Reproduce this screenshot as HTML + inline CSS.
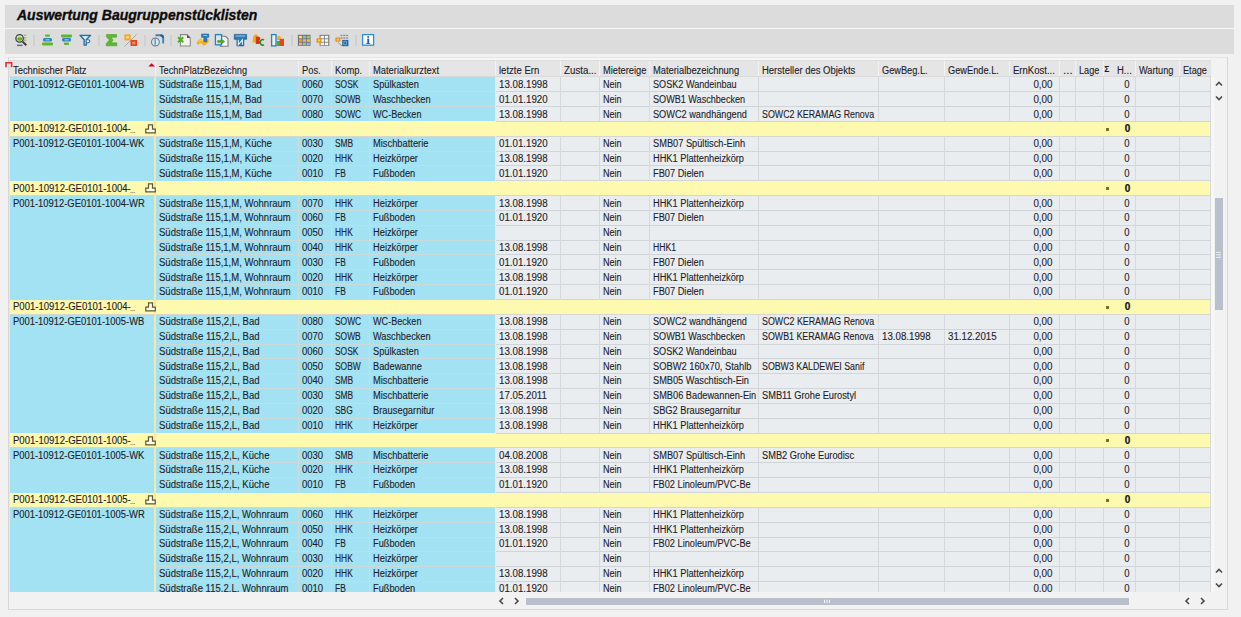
<!DOCTYPE html><html><head><meta charset="utf-8"><style>
*{margin:0;padding:0;box-sizing:border-box}
html,body{width:1241px;height:617px;overflow:hidden;background:#f1f1f1;font-family:"Liberation Sans",sans-serif;color:#262626}
.a{position:absolute}
#title{left:5px;top:5px;width:1229px;height:23px;background:#dcdcdc}
#title span{position:absolute;left:12px;top:2.3px;font:italic bold 14px "Liberation Sans",sans-serif;color:#0c0c0c;white-space:nowrap;-webkit-text-stroke:0.35px #0c0c0c}
#tsep{left:5px;top:28px;width:1229px;height:1px;background:#f7f7f7}
#tb{left:5px;top:29px;width:1229px;height:25px;background:#dcdcdc}
#panel{left:8px;top:57px;width:1220px;height:553px;border:1px solid #d6d6d6;border-top-color:#e4e4e4;border-width:1px 1px 1px 1px;border-bottom-color:#d9d9d9;background:#f2f2f2}
.t{position:absolute;white-space:nowrap;font-size:10px;line-height:12px;color:#23232f;-webkit-text-stroke:0.12px #1e1e2a;color:#1e1e2a;transform-origin:0 0}
.r{text-align:right}
.hd{background:#e5e5e5}
.b{background:#a3e2f2}
.g{background:#eaedf0}
.y{background:#fdf9af}
</style></head><body>
<div id="title" class="a"><span>Auswertung Baugruppenstücklisten</span></div>
<div id="tsep" class="a"></div>
<div id="tb" class="a"></div>
<div id="panel" class="a"></div>
<svg class="a" style="left:0;top:0" width="400" height="56" viewBox="0 0 400 56"><rect x="33.5" y="35" width="1" height="11" fill="#c4c4c4"/><rect x="98.5" y="35" width="1" height="11" fill="#c4c4c4"/><rect x="144.5" y="35" width="1" height="11" fill="#c4c4c4"/><rect x="170.5" y="35" width="1" height="11" fill="#c4c4c4"/><rect x="291.5" y="35" width="1" height="11" fill="#c4c4c4"/><rect x="355.5" y="35" width="1" height="11" fill="#c4c4c4"/><path d="M25.8 34.5v1.6M25.8 37v1.6M25.8 39.5v1.6" stroke="#9ccc3a" stroke-width="1.3"/><path d="M24.3 34.5v1.6M24.3 37v1.6M24.3 39.5v1.6" stroke="#777" stroke-width="0.6"/><circle cx="19.6" cy="38.4" r="3.7" fill="#d8efb0" stroke="#3e3e4a" stroke-width="1.3"/><ellipse cx="19.8" cy="38.8" rx="2.6" ry="1.9" fill="#5fb31f"/><path d="M22.6 41.6 L26.3 45.3" stroke="#3a3a3a" stroke-width="2"/><rect x="17" y="44.6" width="5.5" height="1.5" fill="#6a6a78"/><rect x="45" y="34.5" width="5" height="2.3" rx="0.8" fill="#5cb82e"/><rect x="43" y="38" width="9" height="3.6" rx="1.5" fill="#2f7fc1"/><rect x="45.5" y="39.2" width="4" height="1.2" fill="#9cc6ea"/><rect x="42" y="42.6" width="11" height="2.8" rx="0.8" fill="#5cb82e"/><rect x="61" y="34.6" width="11" height="2.8" rx="0.8" fill="#5cb82e"/><rect x="62" y="38" width="9" height="3.6" rx="1.5" fill="#2f7fc1"/><rect x="64.5" y="39.2" width="4" height="1.2" fill="#9cc6ea"/><rect x="64" y="42.6" width="5" height="2.5" rx="0.8" fill="#5cb82e"/><path d="M80 35.3 H90.6 L86.3 39.8 V45.2 L84.1 45.2 V39.8 Z" fill="#a8dcf5" stroke="#2c6e99" stroke-width="1.3" stroke-linejoin="round"/><path d="M82.8 36.6 H88 L85.4 39 Z" fill="#d8f0fb"/><path d="M86.8 39.8 h1.4 a1.5 1.5 0 0 1 0 3 h-1.4" stroke="#2c6e99" stroke-width="1.1" fill="#fff"/><path d="M106.5 34.5 H116.5 V37.3 H111 L113.2 40 L111 42.8 H116.8 V45.8 H106.3 V43.5 L109.4 40 L106.3 36.8 Z" fill="#5cb82e" stroke="#3e9a1c" stroke-width="0.5"/><path d="M136.5 34.5 L124.5 46.5" stroke="#9a9a9a" stroke-width="0.8"/><rect x="124.4" y="34.4" width="6.2" height="6" fill="#f5a623"/><rect x="126" y="36" width="3" height="2.6" fill="#fbd36b"/><rect x="130.5" y="40" width="6.5" height="6" fill="#e0471b"/><rect x="132.2" y="41.6" width="3.2" height="2.8" fill="#f08a5d"/><path d="M155.5 35.2 H159.8 Q163.2 35.2 163.2 38.6 V43.6" fill="none" stroke="#3a86bd" stroke-width="1.9"/><path d="M160.5 35.2 Q163.2 35.4 163.2 38" fill="none" stroke="#1f5f96" stroke-width="1.9"/><circle cx="155.4" cy="42" r="3.9" fill="#cfe8f7" stroke="#7b7b86" stroke-width="1.1"/><path d="M155.2 39.2 V44.8" stroke="#3a86bd" stroke-width="1.2"/><path d="M156.3 41.5 H157.6 M156.3 43 H157.6" stroke="#fff" stroke-width="0.7"/><path d="M180.5 34.6 H187 L190.3 37.9 V46 H180.5 Z" fill="#f2f2f2" stroke="#8a8a8a" stroke-width="1.1"/><path d="M187 34.6 V37.9 H190.3 Z" fill="#555"/><path d="M178 37.3 L183.3 42.3 M183.3 37.3 L178 42.3" stroke="#4fae1c" stroke-width="2"/><path d="M196.5 42.3 L200.5 38.6 L203.5 41 L208.8 38.5 L208.5 42.5 L204 46 L201 43.2 L197.5 45 Z" fill="#f7b21a"/><path d="M199 41.5 L201 40 L203.5 42 L207 40.3" fill="none" stroke="#fbd75a" stroke-width="0.9"/><path d="M201.6 34.1 H208.8 V37.3 H206.8 V41.8 H203.8 V37.3 H201.6 Z" fill="#2b7fc0" stroke="#1c5f98" stroke-width="0.6"/><rect x="203.2" y="35" width="4" height="1" fill="#8ec7ee"/><path d="M220.3 36.3 H225.5 L228 38.8 V46.2 H220.3 Z" fill="#fff" stroke="#7a7a7a" stroke-width="1.1"/><rect x="215.4" y="34.6" width="6.2" height="10.2" fill="#d6e9f7" stroke="#2b7fc0" stroke-width="1.3"/><path d="M217.6 40.6 H221.2 V38.8 L224.8 41.5 L221.2 44.2 V42.4 H217.6 Z" fill="#52b11f" stroke="#3a8d17" stroke-width="0.5"/><path d="M234.3 34.4 H246.6 V39.3 H243.8 V45.9 H236.9 V39.3 H234.3 Z" fill="#2b78b8" stroke="#1d5a8e" stroke-width="0.7"/><rect x="235.6" y="35.4" width="9.7" height="1.2" fill="#86c0ea"/><path d="M238.3 39.8 V44.8 L242.4 39.8 V44.8" fill="none" stroke="#e4f2fb" stroke-width="1.1"/><path d="M252.4 42.5 L253.3 36.5 Q254.5 34 256.3 34.2 Q258 34.6 258.3 37 L258.6 42.5 Z" fill="#f4ad14"/><path d="M255.8 36.8 h3 a2 1.8 0 0 1 0 3.5 a2 1.8 0 0 1 0 3.6 h-3 Z" fill="#d8321a"/><path d="M264 40 a2.4 2.8 0 1 0 0 4.6" stroke="#2f8a2e" stroke-width="1.7" fill="none"/><rect x="271.6" y="34.6" width="4.4" height="11.3" fill="#e8f2fa" stroke="#2d7fc0" stroke-width="1.3"/><rect x="277" y="36" width="3.6" height="4" fill="#f6b21b"/><rect x="276.6" y="41" width="3.6" height="5" fill="#4caf2a"/><rect x="279.6" y="38.8" width="4.4" height="7.2" fill="#e0471b"/><rect x="297.9" y="34.8" width="12.6" height="11" fill="#6d6d6d"/><rect x="298.9" y="35.8" width="3.2" height="2.6" fill="#f5e15a"/><rect x="302.8" y="35.8" width="3.2" height="2.6" fill="#8ab4e8"/><rect x="306.7" y="35.8" width="3.2" height="2.6" fill="#8fd06a"/><rect x="298.9" y="39.2" width="3.2" height="2.6" fill="#f59a23"/><rect x="302.8" y="39.2" width="3.2" height="2.6" fill="#f0a0c8"/><rect x="306.7" y="39.2" width="3.2" height="2.6" fill="#f2c530"/><rect x="298.9" y="42.6" width="3.2" height="2.6" fill="#f2a0c0"/><rect x="302.8" y="42.6" width="3.2" height="2.6" fill="#8fd06a"/><rect x="306.7" y="42.6" width="3.2" height="2.6" fill="#8ab4e8"/><rect x="319.6" y="34.8" width="9.7" height="11" fill="#777"/><rect x="320.6" y="35.8" width="3.4" height="2.6" fill="#f4f4f4"/><rect x="324.8" y="35.8" width="3.4" height="2.6" fill="#f4f4f4"/><rect x="320.6" y="39.2" width="3.4" height="2.6" fill="#f4f4f4"/><rect x="324.8" y="39.2" width="3.4" height="2.6" fill="#f4f4f4"/><rect x="320.6" y="42.6" width="3.4" height="2.6" fill="#f4f4f4"/><rect x="324.8" y="42.6" width="3.4" height="2.6" fill="#f4f4f4"/><rect x="316.5" y="38.2" width="5" height="4.6" rx="1" fill="#f08c1e"/><rect x="318" y="39.4" width="2.2" height="2" fill="#ffd23a"/><rect x="340.5" y="34.8" width="2" height="1.3" fill="#8a8a8a"/><rect x="343.3" y="34.8" width="2" height="1.3" fill="#8a8a8a"/><rect x="346.1" y="34.8" width="2" height="1.3" fill="#8a8a8a"/><rect x="340.5" y="37.4" width="2" height="1.3" fill="#8a8a8a"/><rect x="343.3" y="37.4" width="2" height="1.3" fill="#8a8a8a"/><rect x="346.1" y="37.4" width="2" height="1.3" fill="#8a8a8a"/><rect x="335.3" y="37.6" width="5" height="4.2" rx="0.8" fill="#f08c1e"/><rect x="336.8" y="38.7" width="2.2" height="1.9" fill="#ffd23a"/><path d="M338 42.5 L342 46" stroke="#8a8a8a" stroke-width="0.8"/><rect x="342.2" y="39.9" width="6.2" height="6.3" fill="#1f669e"/><path d="M343.8 41.3 h2.6 v3.5 h-2.6 Z" fill="none" stroke="#a8d0ee" stroke-width="0.6"/><rect x="362.6" y="34.6" width="11" height="10.6" fill="#fff" stroke="#2d8fd0" stroke-width="1.3"/><rect x="367.3" y="36.2" width="1.8" height="1.6" fill="#1a5fa8"/><rect x="367.3" y="38.6" width="1.8" height="5" fill="#1a5fa8"/><rect x="366.2" y="43" width="4" height="0.8" fill="#1a5fa8"/></svg>
<div class="a" style="left:0;top:0;width:1241px;height:592.4px;overflow:hidden">
<div class="a" style="left:9px;top:58px;width:1201.5px;height:2px;background:#f6f6f6"></div>
<div class="a" style="left:9px;top:60px;width:1201.5px;height:1px;background:#dcdcdc"></div>
<div class="a hd" style="left:9px;top:61.2px;width:1201.5px;height:15.65px"></div>
<div class="t" style="left:12.5px;top:65px;transform:scaleX(0.938)">Technischer Platz</div>
<div class="a" style="left:154.8px;top:61.2px;width:1px;height:15.65px;background:#f2f2f2"></div>
<div class="t" style="left:158.8px;top:65px;transform:scaleX(0.921)">TechnPlatzBezeichng</div>
<div class="a" style="left:298.1px;top:61.2px;width:1px;height:15.65px;background:#f2f2f2"></div>
<div class="t" style="left:302.1px;top:65px;transform:scaleX(0.935)">Pos.</div>
<div class="a" style="left:331px;top:61.2px;width:1px;height:15.65px;background:#f2f2f2"></div>
<div class="t" style="left:335px;top:65px;transform:scaleX(0.936)">Komp.</div>
<div class="a" style="left:369px;top:61.2px;width:1px;height:15.65px;background:#f2f2f2"></div>
<div class="t" style="left:373px;top:65px;transform:scaleX(0.936)">Materialkurztext</div>
<div class="a" style="left:495px;top:61.2px;width:1px;height:15.65px;background:#f2f2f2"></div>
<div class="t" style="left:499px;top:65px;transform:scaleX(0.953)">letzte Ern</div>
<div class="a" style="left:559.8px;top:61.2px;width:1px;height:15.65px;background:#f2f2f2"></div>
<div class="t" style="left:563.8px;top:65px;transform:scaleX(0.976)">Zusta...</div>
<div class="a" style="left:599.3px;top:61.2px;width:1px;height:15.65px;background:#f2f2f2"></div>
<div class="t" style="left:603.3px;top:65px;transform:scaleX(0.928)">Mietereige</div>
<div class="a" style="left:648.5px;top:61.2px;width:1px;height:15.65px;background:#f2f2f2"></div>
<div class="t" style="left:652.5px;top:65px;transform:scaleX(0.934)">Materialbezeichnung</div>
<div class="a" style="left:757.9px;top:61.2px;width:1px;height:15.65px;background:#f2f2f2"></div>
<div class="t" style="left:761.9px;top:65px;transform:scaleX(0.948)">Hersteller des Objekts</div>
<div class="a" style="left:878px;top:61.2px;width:1px;height:15.65px;background:#f2f2f2"></div>
<div class="t" style="left:882px;top:65px;transform:scaleX(0.922)">GewBeg.L.</div>
<div class="a" style="left:943.7px;top:61.2px;width:1px;height:15.65px;background:#f2f2f2"></div>
<div class="t" style="left:947.7px;top:65px;transform:scaleX(0.924)">GewEnde.L.</div>
<div class="a" style="left:1009.3px;top:61.2px;width:1px;height:15.65px;background:#f2f2f2"></div>
<div class="t" style="left:1013.3px;top:65px;transform:scaleX(0.954)">ErnKost...</div>
<div class="a" style="left:1058.7px;top:61.2px;width:1px;height:15.65px;background:#f2f2f2"></div>
<div class="t" style="left:1062.7px;top:65px;transform:scaleX(1.152)">...</div>
<div class="a" style="left:1075px;top:61.2px;width:1px;height:15.65px;background:#f2f2f2"></div>
<div class="t" style="left:1079px;top:65px;transform:scaleX(0.913)">Lage</div>
<div class="a" style="left:1102.9px;top:61.2px;width:1px;height:15.65px;background:#f2f2f2"></div>
<div class="t" style="left:1117px;top:65px;transform:scaleX(0.95)">H...</div>
<div class="a" style="left:1135.1px;top:61.2px;width:1px;height:15.65px;background:#f2f2f2"></div>
<div class="t" style="left:1139.1px;top:65px;transform:scaleX(0.919)">Wartung</div>
<div class="a" style="left:1178.8px;top:61.2px;width:1px;height:15.65px;background:#f2f2f2"></div>
<div class="t" style="left:1182.8px;top:65px;transform:scaleX(0.917)">Etage</div>
<div class="t" style="left:1104.3px;top:63px;font-size:8.5px;font-weight:bold;-webkit-text-stroke:0">&#931;</div>
<div class="a b" style="left:9px;top:76.85px;width:486.5px;height:14.85px"></div>
<div class="a g" style="left:495.5px;top:76.85px;width:715px;height:14.85px"></div>
<div class="a b" style="left:9px;top:91.69px;width:486.5px;height:14.85px"></div>
<div class="a g" style="left:495.5px;top:91.69px;width:715px;height:14.85px"></div>
<div class="a b" style="left:9px;top:106.54px;width:486.5px;height:14.85px"></div>
<div class="a g" style="left:495.5px;top:106.54px;width:715px;height:14.85px"></div>
<div class="a y" style="left:9px;top:121.38px;width:1201.5px;height:14.85px"></div>
<div class="a b" style="left:9px;top:136.23px;width:486.5px;height:14.85px"></div>
<div class="a g" style="left:495.5px;top:136.23px;width:715px;height:14.85px"></div>
<div class="a b" style="left:9px;top:151.07px;width:486.5px;height:14.85px"></div>
<div class="a g" style="left:495.5px;top:151.07px;width:715px;height:14.85px"></div>
<div class="a b" style="left:9px;top:165.92px;width:486.5px;height:14.85px"></div>
<div class="a g" style="left:495.5px;top:165.92px;width:715px;height:14.85px"></div>
<div class="a y" style="left:9px;top:180.76px;width:1201.5px;height:14.85px"></div>
<div class="a b" style="left:9px;top:195.61px;width:486.5px;height:14.85px"></div>
<div class="a g" style="left:495.5px;top:195.61px;width:715px;height:14.85px"></div>
<div class="a b" style="left:9px;top:210.46px;width:486.5px;height:14.85px"></div>
<div class="a g" style="left:495.5px;top:210.46px;width:715px;height:14.85px"></div>
<div class="a b" style="left:9px;top:225.3px;width:486.5px;height:14.85px"></div>
<div class="a g" style="left:495.5px;top:225.3px;width:715px;height:14.85px"></div>
<div class="a b" style="left:9px;top:240.15px;width:486.5px;height:14.85px"></div>
<div class="a g" style="left:495.5px;top:240.15px;width:715px;height:14.85px"></div>
<div class="a b" style="left:9px;top:254.99px;width:486.5px;height:14.85px"></div>
<div class="a g" style="left:495.5px;top:254.99px;width:715px;height:14.85px"></div>
<div class="a b" style="left:9px;top:269.84px;width:486.5px;height:14.85px"></div>
<div class="a g" style="left:495.5px;top:269.84px;width:715px;height:14.85px"></div>
<div class="a b" style="left:9px;top:284.68px;width:486.5px;height:14.85px"></div>
<div class="a g" style="left:495.5px;top:284.68px;width:715px;height:14.85px"></div>
<div class="a y" style="left:9px;top:299.52px;width:1201.5px;height:14.85px"></div>
<div class="a b" style="left:9px;top:314.37px;width:486.5px;height:14.85px"></div>
<div class="a g" style="left:495.5px;top:314.37px;width:715px;height:14.85px"></div>
<div class="a b" style="left:9px;top:329.22px;width:486.5px;height:14.85px"></div>
<div class="a g" style="left:495.5px;top:329.22px;width:715px;height:14.85px"></div>
<div class="a b" style="left:9px;top:344.06px;width:486.5px;height:14.85px"></div>
<div class="a g" style="left:495.5px;top:344.06px;width:715px;height:14.85px"></div>
<div class="a b" style="left:9px;top:358.9px;width:486.5px;height:14.85px"></div>
<div class="a g" style="left:495.5px;top:358.9px;width:715px;height:14.85px"></div>
<div class="a b" style="left:9px;top:373.75px;width:486.5px;height:14.85px"></div>
<div class="a g" style="left:495.5px;top:373.75px;width:715px;height:14.85px"></div>
<div class="a b" style="left:9px;top:388.6px;width:486.5px;height:14.85px"></div>
<div class="a g" style="left:495.5px;top:388.6px;width:715px;height:14.85px"></div>
<div class="a b" style="left:9px;top:403.44px;width:486.5px;height:14.85px"></div>
<div class="a g" style="left:495.5px;top:403.44px;width:715px;height:14.85px"></div>
<div class="a b" style="left:9px;top:418.28px;width:486.5px;height:14.85px"></div>
<div class="a g" style="left:495.5px;top:418.28px;width:715px;height:14.85px"></div>
<div class="a y" style="left:9px;top:433.13px;width:1201.5px;height:14.85px"></div>
<div class="a b" style="left:9px;top:447.98px;width:486.5px;height:14.85px"></div>
<div class="a g" style="left:495.5px;top:447.98px;width:715px;height:14.85px"></div>
<div class="a b" style="left:9px;top:462.82px;width:486.5px;height:14.85px"></div>
<div class="a g" style="left:495.5px;top:462.82px;width:715px;height:14.85px"></div>
<div class="a b" style="left:9px;top:477.66px;width:486.5px;height:14.85px"></div>
<div class="a g" style="left:495.5px;top:477.66px;width:715px;height:14.85px"></div>
<div class="a y" style="left:9px;top:492.51px;width:1201.5px;height:14.85px"></div>
<div class="a b" style="left:9px;top:507.36px;width:486.5px;height:14.85px"></div>
<div class="a g" style="left:495.5px;top:507.36px;width:715px;height:14.85px"></div>
<div class="a b" style="left:9px;top:522.2px;width:486.5px;height:14.85px"></div>
<div class="a g" style="left:495.5px;top:522.2px;width:715px;height:14.85px"></div>
<div class="a b" style="left:9px;top:537.04px;width:486.5px;height:14.85px"></div>
<div class="a g" style="left:495.5px;top:537.04px;width:715px;height:14.85px"></div>
<div class="a b" style="left:9px;top:551.89px;width:486.5px;height:14.85px"></div>
<div class="a g" style="left:495.5px;top:551.89px;width:715px;height:14.85px"></div>
<div class="a b" style="left:9px;top:566.74px;width:486.5px;height:14.85px"></div>
<div class="a g" style="left:495.5px;top:566.74px;width:715px;height:14.85px"></div>
<div class="a b" style="left:9px;top:581.58px;width:486.5px;height:14.85px"></div>
<div class="a g" style="left:495.5px;top:581.58px;width:715px;height:14.85px"></div>
<div class="a y" style="left:9px;top:596.43px;width:1201.5px;height:14.85px"></div>
<div class="a" style="left:155.3px;top:91.19px;width:340.2px;height:1px;background:#cad9da"></div>
<div class="a" style="left:495.5px;top:91.19px;width:715px;height:1px;background:#d1d5d9"></div>
<div class="a" style="left:298.1px;top:76.85px;width:1px;height:14.85px;background:#cddcda"></div>
<div class="a" style="left:331px;top:76.85px;width:1px;height:14.85px;background:#cddcda"></div>
<div class="a" style="left:369px;top:76.85px;width:1px;height:14.85px;background:#cddcda"></div>
<div class="a" style="left:495px;top:76.85px;width:1px;height:14.85px;background:#e6eaee"></div>
<div class="a" style="left:559.8px;top:76.85px;width:1px;height:14.85px;background:#d6d9dd"></div>
<div class="a" style="left:599.3px;top:76.85px;width:1px;height:14.85px;background:#d6d9dd"></div>
<div class="a" style="left:648.5px;top:76.85px;width:1px;height:14.85px;background:#d6d9dd"></div>
<div class="a" style="left:757.9px;top:76.85px;width:1px;height:14.85px;background:#d6d9dd"></div>
<div class="a" style="left:878px;top:76.85px;width:1px;height:14.85px;background:#d6d9dd"></div>
<div class="a" style="left:943.7px;top:76.85px;width:1px;height:14.85px;background:#d6d9dd"></div>
<div class="a" style="left:1009.3px;top:76.85px;width:1px;height:14.85px;background:#d6d9dd"></div>
<div class="a" style="left:1058.7px;top:76.85px;width:1px;height:14.85px;background:#d6d9dd"></div>
<div class="a" style="left:1075px;top:76.85px;width:1px;height:14.85px;background:#d6d9dd"></div>
<div class="a" style="left:1102.9px;top:76.85px;width:1px;height:14.85px;background:#d6d9dd"></div>
<div class="a" style="left:1135.1px;top:76.85px;width:1px;height:14.85px;background:#d6d9dd"></div>
<div class="a" style="left:1178.8px;top:76.85px;width:1px;height:14.85px;background:#d6d9dd"></div>
<div class="a" style="left:155.3px;top:106.04px;width:340.2px;height:1px;background:#cad9da"></div>
<div class="a" style="left:495.5px;top:106.04px;width:715px;height:1px;background:#d1d5d9"></div>
<div class="a" style="left:298.1px;top:91.69px;width:1px;height:14.85px;background:#cddcda"></div>
<div class="a" style="left:331px;top:91.69px;width:1px;height:14.85px;background:#cddcda"></div>
<div class="a" style="left:369px;top:91.69px;width:1px;height:14.85px;background:#cddcda"></div>
<div class="a" style="left:495px;top:91.69px;width:1px;height:14.85px;background:#e6eaee"></div>
<div class="a" style="left:559.8px;top:91.69px;width:1px;height:14.85px;background:#d6d9dd"></div>
<div class="a" style="left:599.3px;top:91.69px;width:1px;height:14.85px;background:#d6d9dd"></div>
<div class="a" style="left:648.5px;top:91.69px;width:1px;height:14.85px;background:#d6d9dd"></div>
<div class="a" style="left:757.9px;top:91.69px;width:1px;height:14.85px;background:#d6d9dd"></div>
<div class="a" style="left:878px;top:91.69px;width:1px;height:14.85px;background:#d6d9dd"></div>
<div class="a" style="left:943.7px;top:91.69px;width:1px;height:14.85px;background:#d6d9dd"></div>
<div class="a" style="left:1009.3px;top:91.69px;width:1px;height:14.85px;background:#d6d9dd"></div>
<div class="a" style="left:1058.7px;top:91.69px;width:1px;height:14.85px;background:#d6d9dd"></div>
<div class="a" style="left:1075px;top:91.69px;width:1px;height:14.85px;background:#d6d9dd"></div>
<div class="a" style="left:1102.9px;top:91.69px;width:1px;height:14.85px;background:#d6d9dd"></div>
<div class="a" style="left:1135.1px;top:91.69px;width:1px;height:14.85px;background:#d6d9dd"></div>
<div class="a" style="left:1178.8px;top:91.69px;width:1px;height:14.85px;background:#d6d9dd"></div>
<div class="a" style="left:495.5px;top:120.88px;width:715px;height:1px;background:#d1d5d9"></div>
<div class="a" style="left:298.1px;top:106.54px;width:1px;height:14.85px;background:#cddcda"></div>
<div class="a" style="left:331px;top:106.54px;width:1px;height:14.85px;background:#cddcda"></div>
<div class="a" style="left:369px;top:106.54px;width:1px;height:14.85px;background:#cddcda"></div>
<div class="a" style="left:495px;top:106.54px;width:1px;height:14.85px;background:#e6eaee"></div>
<div class="a" style="left:559.8px;top:106.54px;width:1px;height:14.85px;background:#d6d9dd"></div>
<div class="a" style="left:599.3px;top:106.54px;width:1px;height:14.85px;background:#d6d9dd"></div>
<div class="a" style="left:648.5px;top:106.54px;width:1px;height:14.85px;background:#d6d9dd"></div>
<div class="a" style="left:757.9px;top:106.54px;width:1px;height:14.85px;background:#d6d9dd"></div>
<div class="a" style="left:878px;top:106.54px;width:1px;height:14.85px;background:#d6d9dd"></div>
<div class="a" style="left:943.7px;top:106.54px;width:1px;height:14.85px;background:#d6d9dd"></div>
<div class="a" style="left:1009.3px;top:106.54px;width:1px;height:14.85px;background:#d6d9dd"></div>
<div class="a" style="left:1058.7px;top:106.54px;width:1px;height:14.85px;background:#d6d9dd"></div>
<div class="a" style="left:1075px;top:106.54px;width:1px;height:14.85px;background:#d6d9dd"></div>
<div class="a" style="left:1102.9px;top:106.54px;width:1px;height:14.85px;background:#d6d9dd"></div>
<div class="a" style="left:1135.1px;top:106.54px;width:1px;height:14.85px;background:#d6d9dd"></div>
<div class="a" style="left:1178.8px;top:106.54px;width:1px;height:14.85px;background:#d6d9dd"></div>
<div class="a" style="left:9px;top:135.73px;width:1201.5px;height:1px;background:#d6d8d0"></div>
<div class="a" style="left:155.3px;top:150.57px;width:340.2px;height:1px;background:#cad9da"></div>
<div class="a" style="left:495.5px;top:150.57px;width:715px;height:1px;background:#d1d5d9"></div>
<div class="a" style="left:298.1px;top:136.23px;width:1px;height:14.85px;background:#cddcda"></div>
<div class="a" style="left:331px;top:136.23px;width:1px;height:14.85px;background:#cddcda"></div>
<div class="a" style="left:369px;top:136.23px;width:1px;height:14.85px;background:#cddcda"></div>
<div class="a" style="left:495px;top:136.23px;width:1px;height:14.85px;background:#e6eaee"></div>
<div class="a" style="left:559.8px;top:136.23px;width:1px;height:14.85px;background:#d6d9dd"></div>
<div class="a" style="left:599.3px;top:136.23px;width:1px;height:14.85px;background:#d6d9dd"></div>
<div class="a" style="left:648.5px;top:136.23px;width:1px;height:14.85px;background:#d6d9dd"></div>
<div class="a" style="left:757.9px;top:136.23px;width:1px;height:14.85px;background:#d6d9dd"></div>
<div class="a" style="left:878px;top:136.23px;width:1px;height:14.85px;background:#d6d9dd"></div>
<div class="a" style="left:943.7px;top:136.23px;width:1px;height:14.85px;background:#d6d9dd"></div>
<div class="a" style="left:1009.3px;top:136.23px;width:1px;height:14.85px;background:#d6d9dd"></div>
<div class="a" style="left:1058.7px;top:136.23px;width:1px;height:14.85px;background:#d6d9dd"></div>
<div class="a" style="left:1075px;top:136.23px;width:1px;height:14.85px;background:#d6d9dd"></div>
<div class="a" style="left:1102.9px;top:136.23px;width:1px;height:14.85px;background:#d6d9dd"></div>
<div class="a" style="left:1135.1px;top:136.23px;width:1px;height:14.85px;background:#d6d9dd"></div>
<div class="a" style="left:1178.8px;top:136.23px;width:1px;height:14.85px;background:#d6d9dd"></div>
<div class="a" style="left:155.3px;top:165.42px;width:340.2px;height:1px;background:#cad9da"></div>
<div class="a" style="left:495.5px;top:165.42px;width:715px;height:1px;background:#d1d5d9"></div>
<div class="a" style="left:298.1px;top:151.07px;width:1px;height:14.85px;background:#cddcda"></div>
<div class="a" style="left:331px;top:151.07px;width:1px;height:14.85px;background:#cddcda"></div>
<div class="a" style="left:369px;top:151.07px;width:1px;height:14.85px;background:#cddcda"></div>
<div class="a" style="left:495px;top:151.07px;width:1px;height:14.85px;background:#e6eaee"></div>
<div class="a" style="left:559.8px;top:151.07px;width:1px;height:14.85px;background:#d6d9dd"></div>
<div class="a" style="left:599.3px;top:151.07px;width:1px;height:14.85px;background:#d6d9dd"></div>
<div class="a" style="left:648.5px;top:151.07px;width:1px;height:14.85px;background:#d6d9dd"></div>
<div class="a" style="left:757.9px;top:151.07px;width:1px;height:14.85px;background:#d6d9dd"></div>
<div class="a" style="left:878px;top:151.07px;width:1px;height:14.85px;background:#d6d9dd"></div>
<div class="a" style="left:943.7px;top:151.07px;width:1px;height:14.85px;background:#d6d9dd"></div>
<div class="a" style="left:1009.3px;top:151.07px;width:1px;height:14.85px;background:#d6d9dd"></div>
<div class="a" style="left:1058.7px;top:151.07px;width:1px;height:14.85px;background:#d6d9dd"></div>
<div class="a" style="left:1075px;top:151.07px;width:1px;height:14.85px;background:#d6d9dd"></div>
<div class="a" style="left:1102.9px;top:151.07px;width:1px;height:14.85px;background:#d6d9dd"></div>
<div class="a" style="left:1135.1px;top:151.07px;width:1px;height:14.85px;background:#d6d9dd"></div>
<div class="a" style="left:1178.8px;top:151.07px;width:1px;height:14.85px;background:#d6d9dd"></div>
<div class="a" style="left:495.5px;top:180.27px;width:715px;height:1px;background:#d1d5d9"></div>
<div class="a" style="left:298.1px;top:165.92px;width:1px;height:14.85px;background:#cddcda"></div>
<div class="a" style="left:331px;top:165.92px;width:1px;height:14.85px;background:#cddcda"></div>
<div class="a" style="left:369px;top:165.92px;width:1px;height:14.85px;background:#cddcda"></div>
<div class="a" style="left:495px;top:165.92px;width:1px;height:14.85px;background:#e6eaee"></div>
<div class="a" style="left:559.8px;top:165.92px;width:1px;height:14.85px;background:#d6d9dd"></div>
<div class="a" style="left:599.3px;top:165.92px;width:1px;height:14.85px;background:#d6d9dd"></div>
<div class="a" style="left:648.5px;top:165.92px;width:1px;height:14.85px;background:#d6d9dd"></div>
<div class="a" style="left:757.9px;top:165.92px;width:1px;height:14.85px;background:#d6d9dd"></div>
<div class="a" style="left:878px;top:165.92px;width:1px;height:14.85px;background:#d6d9dd"></div>
<div class="a" style="left:943.7px;top:165.92px;width:1px;height:14.85px;background:#d6d9dd"></div>
<div class="a" style="left:1009.3px;top:165.92px;width:1px;height:14.85px;background:#d6d9dd"></div>
<div class="a" style="left:1058.7px;top:165.92px;width:1px;height:14.85px;background:#d6d9dd"></div>
<div class="a" style="left:1075px;top:165.92px;width:1px;height:14.85px;background:#d6d9dd"></div>
<div class="a" style="left:1102.9px;top:165.92px;width:1px;height:14.85px;background:#d6d9dd"></div>
<div class="a" style="left:1135.1px;top:165.92px;width:1px;height:14.85px;background:#d6d9dd"></div>
<div class="a" style="left:1178.8px;top:165.92px;width:1px;height:14.85px;background:#d6d9dd"></div>
<div class="a" style="left:9px;top:195.11px;width:1201.5px;height:1px;background:#d6d8d0"></div>
<div class="a" style="left:155.3px;top:209.96px;width:340.2px;height:1px;background:#cad9da"></div>
<div class="a" style="left:495.5px;top:209.96px;width:715px;height:1px;background:#d1d5d9"></div>
<div class="a" style="left:298.1px;top:195.61px;width:1px;height:14.85px;background:#cddcda"></div>
<div class="a" style="left:331px;top:195.61px;width:1px;height:14.85px;background:#cddcda"></div>
<div class="a" style="left:369px;top:195.61px;width:1px;height:14.85px;background:#cddcda"></div>
<div class="a" style="left:495px;top:195.61px;width:1px;height:14.85px;background:#e6eaee"></div>
<div class="a" style="left:559.8px;top:195.61px;width:1px;height:14.85px;background:#d6d9dd"></div>
<div class="a" style="left:599.3px;top:195.61px;width:1px;height:14.85px;background:#d6d9dd"></div>
<div class="a" style="left:648.5px;top:195.61px;width:1px;height:14.85px;background:#d6d9dd"></div>
<div class="a" style="left:757.9px;top:195.61px;width:1px;height:14.85px;background:#d6d9dd"></div>
<div class="a" style="left:878px;top:195.61px;width:1px;height:14.85px;background:#d6d9dd"></div>
<div class="a" style="left:943.7px;top:195.61px;width:1px;height:14.85px;background:#d6d9dd"></div>
<div class="a" style="left:1009.3px;top:195.61px;width:1px;height:14.85px;background:#d6d9dd"></div>
<div class="a" style="left:1058.7px;top:195.61px;width:1px;height:14.85px;background:#d6d9dd"></div>
<div class="a" style="left:1075px;top:195.61px;width:1px;height:14.85px;background:#d6d9dd"></div>
<div class="a" style="left:1102.9px;top:195.61px;width:1px;height:14.85px;background:#d6d9dd"></div>
<div class="a" style="left:1135.1px;top:195.61px;width:1px;height:14.85px;background:#d6d9dd"></div>
<div class="a" style="left:1178.8px;top:195.61px;width:1px;height:14.85px;background:#d6d9dd"></div>
<div class="a" style="left:155.3px;top:224.8px;width:340.2px;height:1px;background:#cad9da"></div>
<div class="a" style="left:495.5px;top:224.8px;width:715px;height:1px;background:#d1d5d9"></div>
<div class="a" style="left:298.1px;top:210.46px;width:1px;height:14.85px;background:#cddcda"></div>
<div class="a" style="left:331px;top:210.46px;width:1px;height:14.85px;background:#cddcda"></div>
<div class="a" style="left:369px;top:210.46px;width:1px;height:14.85px;background:#cddcda"></div>
<div class="a" style="left:495px;top:210.46px;width:1px;height:14.85px;background:#e6eaee"></div>
<div class="a" style="left:559.8px;top:210.46px;width:1px;height:14.85px;background:#d6d9dd"></div>
<div class="a" style="left:599.3px;top:210.46px;width:1px;height:14.85px;background:#d6d9dd"></div>
<div class="a" style="left:648.5px;top:210.46px;width:1px;height:14.85px;background:#d6d9dd"></div>
<div class="a" style="left:757.9px;top:210.46px;width:1px;height:14.85px;background:#d6d9dd"></div>
<div class="a" style="left:878px;top:210.46px;width:1px;height:14.85px;background:#d6d9dd"></div>
<div class="a" style="left:943.7px;top:210.46px;width:1px;height:14.85px;background:#d6d9dd"></div>
<div class="a" style="left:1009.3px;top:210.46px;width:1px;height:14.85px;background:#d6d9dd"></div>
<div class="a" style="left:1058.7px;top:210.46px;width:1px;height:14.85px;background:#d6d9dd"></div>
<div class="a" style="left:1075px;top:210.46px;width:1px;height:14.85px;background:#d6d9dd"></div>
<div class="a" style="left:1102.9px;top:210.46px;width:1px;height:14.85px;background:#d6d9dd"></div>
<div class="a" style="left:1135.1px;top:210.46px;width:1px;height:14.85px;background:#d6d9dd"></div>
<div class="a" style="left:1178.8px;top:210.46px;width:1px;height:14.85px;background:#d6d9dd"></div>
<div class="a" style="left:155.3px;top:239.65px;width:340.2px;height:1px;background:#cad9da"></div>
<div class="a" style="left:495.5px;top:239.65px;width:715px;height:1px;background:#d1d5d9"></div>
<div class="a" style="left:298.1px;top:225.3px;width:1px;height:14.85px;background:#cddcda"></div>
<div class="a" style="left:331px;top:225.3px;width:1px;height:14.85px;background:#cddcda"></div>
<div class="a" style="left:369px;top:225.3px;width:1px;height:14.85px;background:#cddcda"></div>
<div class="a" style="left:495px;top:225.3px;width:1px;height:14.85px;background:#e6eaee"></div>
<div class="a" style="left:559.8px;top:225.3px;width:1px;height:14.85px;background:#d6d9dd"></div>
<div class="a" style="left:599.3px;top:225.3px;width:1px;height:14.85px;background:#d6d9dd"></div>
<div class="a" style="left:648.5px;top:225.3px;width:1px;height:14.85px;background:#d6d9dd"></div>
<div class="a" style="left:757.9px;top:225.3px;width:1px;height:14.85px;background:#d6d9dd"></div>
<div class="a" style="left:878px;top:225.3px;width:1px;height:14.85px;background:#d6d9dd"></div>
<div class="a" style="left:943.7px;top:225.3px;width:1px;height:14.85px;background:#d6d9dd"></div>
<div class="a" style="left:1009.3px;top:225.3px;width:1px;height:14.85px;background:#d6d9dd"></div>
<div class="a" style="left:1058.7px;top:225.3px;width:1px;height:14.85px;background:#d6d9dd"></div>
<div class="a" style="left:1075px;top:225.3px;width:1px;height:14.85px;background:#d6d9dd"></div>
<div class="a" style="left:1102.9px;top:225.3px;width:1px;height:14.85px;background:#d6d9dd"></div>
<div class="a" style="left:1135.1px;top:225.3px;width:1px;height:14.85px;background:#d6d9dd"></div>
<div class="a" style="left:1178.8px;top:225.3px;width:1px;height:14.85px;background:#d6d9dd"></div>
<div class="a" style="left:155.3px;top:254.49px;width:340.2px;height:1px;background:#cad9da"></div>
<div class="a" style="left:495.5px;top:254.49px;width:715px;height:1px;background:#d1d5d9"></div>
<div class="a" style="left:298.1px;top:240.15px;width:1px;height:14.85px;background:#cddcda"></div>
<div class="a" style="left:331px;top:240.15px;width:1px;height:14.85px;background:#cddcda"></div>
<div class="a" style="left:369px;top:240.15px;width:1px;height:14.85px;background:#cddcda"></div>
<div class="a" style="left:495px;top:240.15px;width:1px;height:14.85px;background:#e6eaee"></div>
<div class="a" style="left:559.8px;top:240.15px;width:1px;height:14.85px;background:#d6d9dd"></div>
<div class="a" style="left:599.3px;top:240.15px;width:1px;height:14.85px;background:#d6d9dd"></div>
<div class="a" style="left:648.5px;top:240.15px;width:1px;height:14.85px;background:#d6d9dd"></div>
<div class="a" style="left:757.9px;top:240.15px;width:1px;height:14.85px;background:#d6d9dd"></div>
<div class="a" style="left:878px;top:240.15px;width:1px;height:14.85px;background:#d6d9dd"></div>
<div class="a" style="left:943.7px;top:240.15px;width:1px;height:14.85px;background:#d6d9dd"></div>
<div class="a" style="left:1009.3px;top:240.15px;width:1px;height:14.85px;background:#d6d9dd"></div>
<div class="a" style="left:1058.7px;top:240.15px;width:1px;height:14.85px;background:#d6d9dd"></div>
<div class="a" style="left:1075px;top:240.15px;width:1px;height:14.85px;background:#d6d9dd"></div>
<div class="a" style="left:1102.9px;top:240.15px;width:1px;height:14.85px;background:#d6d9dd"></div>
<div class="a" style="left:1135.1px;top:240.15px;width:1px;height:14.85px;background:#d6d9dd"></div>
<div class="a" style="left:1178.8px;top:240.15px;width:1px;height:14.85px;background:#d6d9dd"></div>
<div class="a" style="left:155.3px;top:269.34px;width:340.2px;height:1px;background:#cad9da"></div>
<div class="a" style="left:495.5px;top:269.34px;width:715px;height:1px;background:#d1d5d9"></div>
<div class="a" style="left:298.1px;top:254.99px;width:1px;height:14.85px;background:#cddcda"></div>
<div class="a" style="left:331px;top:254.99px;width:1px;height:14.85px;background:#cddcda"></div>
<div class="a" style="left:369px;top:254.99px;width:1px;height:14.85px;background:#cddcda"></div>
<div class="a" style="left:495px;top:254.99px;width:1px;height:14.85px;background:#e6eaee"></div>
<div class="a" style="left:559.8px;top:254.99px;width:1px;height:14.85px;background:#d6d9dd"></div>
<div class="a" style="left:599.3px;top:254.99px;width:1px;height:14.85px;background:#d6d9dd"></div>
<div class="a" style="left:648.5px;top:254.99px;width:1px;height:14.85px;background:#d6d9dd"></div>
<div class="a" style="left:757.9px;top:254.99px;width:1px;height:14.85px;background:#d6d9dd"></div>
<div class="a" style="left:878px;top:254.99px;width:1px;height:14.85px;background:#d6d9dd"></div>
<div class="a" style="left:943.7px;top:254.99px;width:1px;height:14.85px;background:#d6d9dd"></div>
<div class="a" style="left:1009.3px;top:254.99px;width:1px;height:14.85px;background:#d6d9dd"></div>
<div class="a" style="left:1058.7px;top:254.99px;width:1px;height:14.85px;background:#d6d9dd"></div>
<div class="a" style="left:1075px;top:254.99px;width:1px;height:14.85px;background:#d6d9dd"></div>
<div class="a" style="left:1102.9px;top:254.99px;width:1px;height:14.85px;background:#d6d9dd"></div>
<div class="a" style="left:1135.1px;top:254.99px;width:1px;height:14.85px;background:#d6d9dd"></div>
<div class="a" style="left:1178.8px;top:254.99px;width:1px;height:14.85px;background:#d6d9dd"></div>
<div class="a" style="left:155.3px;top:284.18px;width:340.2px;height:1px;background:#cad9da"></div>
<div class="a" style="left:495.5px;top:284.18px;width:715px;height:1px;background:#d1d5d9"></div>
<div class="a" style="left:298.1px;top:269.84px;width:1px;height:14.85px;background:#cddcda"></div>
<div class="a" style="left:331px;top:269.84px;width:1px;height:14.85px;background:#cddcda"></div>
<div class="a" style="left:369px;top:269.84px;width:1px;height:14.85px;background:#cddcda"></div>
<div class="a" style="left:495px;top:269.84px;width:1px;height:14.85px;background:#e6eaee"></div>
<div class="a" style="left:559.8px;top:269.84px;width:1px;height:14.85px;background:#d6d9dd"></div>
<div class="a" style="left:599.3px;top:269.84px;width:1px;height:14.85px;background:#d6d9dd"></div>
<div class="a" style="left:648.5px;top:269.84px;width:1px;height:14.85px;background:#d6d9dd"></div>
<div class="a" style="left:757.9px;top:269.84px;width:1px;height:14.85px;background:#d6d9dd"></div>
<div class="a" style="left:878px;top:269.84px;width:1px;height:14.85px;background:#d6d9dd"></div>
<div class="a" style="left:943.7px;top:269.84px;width:1px;height:14.85px;background:#d6d9dd"></div>
<div class="a" style="left:1009.3px;top:269.84px;width:1px;height:14.85px;background:#d6d9dd"></div>
<div class="a" style="left:1058.7px;top:269.84px;width:1px;height:14.85px;background:#d6d9dd"></div>
<div class="a" style="left:1075px;top:269.84px;width:1px;height:14.85px;background:#d6d9dd"></div>
<div class="a" style="left:1102.9px;top:269.84px;width:1px;height:14.85px;background:#d6d9dd"></div>
<div class="a" style="left:1135.1px;top:269.84px;width:1px;height:14.85px;background:#d6d9dd"></div>
<div class="a" style="left:1178.8px;top:269.84px;width:1px;height:14.85px;background:#d6d9dd"></div>
<div class="a" style="left:495.5px;top:299.03px;width:715px;height:1px;background:#d1d5d9"></div>
<div class="a" style="left:298.1px;top:284.68px;width:1px;height:14.85px;background:#cddcda"></div>
<div class="a" style="left:331px;top:284.68px;width:1px;height:14.85px;background:#cddcda"></div>
<div class="a" style="left:369px;top:284.68px;width:1px;height:14.85px;background:#cddcda"></div>
<div class="a" style="left:495px;top:284.68px;width:1px;height:14.85px;background:#e6eaee"></div>
<div class="a" style="left:559.8px;top:284.68px;width:1px;height:14.85px;background:#d6d9dd"></div>
<div class="a" style="left:599.3px;top:284.68px;width:1px;height:14.85px;background:#d6d9dd"></div>
<div class="a" style="left:648.5px;top:284.68px;width:1px;height:14.85px;background:#d6d9dd"></div>
<div class="a" style="left:757.9px;top:284.68px;width:1px;height:14.85px;background:#d6d9dd"></div>
<div class="a" style="left:878px;top:284.68px;width:1px;height:14.85px;background:#d6d9dd"></div>
<div class="a" style="left:943.7px;top:284.68px;width:1px;height:14.85px;background:#d6d9dd"></div>
<div class="a" style="left:1009.3px;top:284.68px;width:1px;height:14.85px;background:#d6d9dd"></div>
<div class="a" style="left:1058.7px;top:284.68px;width:1px;height:14.85px;background:#d6d9dd"></div>
<div class="a" style="left:1075px;top:284.68px;width:1px;height:14.85px;background:#d6d9dd"></div>
<div class="a" style="left:1102.9px;top:284.68px;width:1px;height:14.85px;background:#d6d9dd"></div>
<div class="a" style="left:1135.1px;top:284.68px;width:1px;height:14.85px;background:#d6d9dd"></div>
<div class="a" style="left:1178.8px;top:284.68px;width:1px;height:14.85px;background:#d6d9dd"></div>
<div class="a" style="left:9px;top:313.87px;width:1201.5px;height:1px;background:#d6d8d0"></div>
<div class="a" style="left:155.3px;top:328.72px;width:340.2px;height:1px;background:#cad9da"></div>
<div class="a" style="left:495.5px;top:328.72px;width:715px;height:1px;background:#d1d5d9"></div>
<div class="a" style="left:298.1px;top:314.37px;width:1px;height:14.85px;background:#cddcda"></div>
<div class="a" style="left:331px;top:314.37px;width:1px;height:14.85px;background:#cddcda"></div>
<div class="a" style="left:369px;top:314.37px;width:1px;height:14.85px;background:#cddcda"></div>
<div class="a" style="left:495px;top:314.37px;width:1px;height:14.85px;background:#e6eaee"></div>
<div class="a" style="left:559.8px;top:314.37px;width:1px;height:14.85px;background:#d6d9dd"></div>
<div class="a" style="left:599.3px;top:314.37px;width:1px;height:14.85px;background:#d6d9dd"></div>
<div class="a" style="left:648.5px;top:314.37px;width:1px;height:14.85px;background:#d6d9dd"></div>
<div class="a" style="left:757.9px;top:314.37px;width:1px;height:14.85px;background:#d6d9dd"></div>
<div class="a" style="left:878px;top:314.37px;width:1px;height:14.85px;background:#d6d9dd"></div>
<div class="a" style="left:943.7px;top:314.37px;width:1px;height:14.85px;background:#d6d9dd"></div>
<div class="a" style="left:1009.3px;top:314.37px;width:1px;height:14.85px;background:#d6d9dd"></div>
<div class="a" style="left:1058.7px;top:314.37px;width:1px;height:14.85px;background:#d6d9dd"></div>
<div class="a" style="left:1075px;top:314.37px;width:1px;height:14.85px;background:#d6d9dd"></div>
<div class="a" style="left:1102.9px;top:314.37px;width:1px;height:14.85px;background:#d6d9dd"></div>
<div class="a" style="left:1135.1px;top:314.37px;width:1px;height:14.85px;background:#d6d9dd"></div>
<div class="a" style="left:1178.8px;top:314.37px;width:1px;height:14.85px;background:#d6d9dd"></div>
<div class="a" style="left:155.3px;top:343.56px;width:340.2px;height:1px;background:#cad9da"></div>
<div class="a" style="left:495.5px;top:343.56px;width:715px;height:1px;background:#d1d5d9"></div>
<div class="a" style="left:298.1px;top:329.22px;width:1px;height:14.85px;background:#cddcda"></div>
<div class="a" style="left:331px;top:329.22px;width:1px;height:14.85px;background:#cddcda"></div>
<div class="a" style="left:369px;top:329.22px;width:1px;height:14.85px;background:#cddcda"></div>
<div class="a" style="left:495px;top:329.22px;width:1px;height:14.85px;background:#e6eaee"></div>
<div class="a" style="left:559.8px;top:329.22px;width:1px;height:14.85px;background:#d6d9dd"></div>
<div class="a" style="left:599.3px;top:329.22px;width:1px;height:14.85px;background:#d6d9dd"></div>
<div class="a" style="left:648.5px;top:329.22px;width:1px;height:14.85px;background:#d6d9dd"></div>
<div class="a" style="left:757.9px;top:329.22px;width:1px;height:14.85px;background:#d6d9dd"></div>
<div class="a" style="left:878px;top:329.22px;width:1px;height:14.85px;background:#d6d9dd"></div>
<div class="a" style="left:943.7px;top:329.22px;width:1px;height:14.85px;background:#d6d9dd"></div>
<div class="a" style="left:1009.3px;top:329.22px;width:1px;height:14.85px;background:#d6d9dd"></div>
<div class="a" style="left:1058.7px;top:329.22px;width:1px;height:14.85px;background:#d6d9dd"></div>
<div class="a" style="left:1075px;top:329.22px;width:1px;height:14.85px;background:#d6d9dd"></div>
<div class="a" style="left:1102.9px;top:329.22px;width:1px;height:14.85px;background:#d6d9dd"></div>
<div class="a" style="left:1135.1px;top:329.22px;width:1px;height:14.85px;background:#d6d9dd"></div>
<div class="a" style="left:1178.8px;top:329.22px;width:1px;height:14.85px;background:#d6d9dd"></div>
<div class="a" style="left:155.3px;top:358.41px;width:340.2px;height:1px;background:#cad9da"></div>
<div class="a" style="left:495.5px;top:358.41px;width:715px;height:1px;background:#d1d5d9"></div>
<div class="a" style="left:298.1px;top:344.06px;width:1px;height:14.85px;background:#cddcda"></div>
<div class="a" style="left:331px;top:344.06px;width:1px;height:14.85px;background:#cddcda"></div>
<div class="a" style="left:369px;top:344.06px;width:1px;height:14.85px;background:#cddcda"></div>
<div class="a" style="left:495px;top:344.06px;width:1px;height:14.85px;background:#e6eaee"></div>
<div class="a" style="left:559.8px;top:344.06px;width:1px;height:14.85px;background:#d6d9dd"></div>
<div class="a" style="left:599.3px;top:344.06px;width:1px;height:14.85px;background:#d6d9dd"></div>
<div class="a" style="left:648.5px;top:344.06px;width:1px;height:14.85px;background:#d6d9dd"></div>
<div class="a" style="left:757.9px;top:344.06px;width:1px;height:14.85px;background:#d6d9dd"></div>
<div class="a" style="left:878px;top:344.06px;width:1px;height:14.85px;background:#d6d9dd"></div>
<div class="a" style="left:943.7px;top:344.06px;width:1px;height:14.85px;background:#d6d9dd"></div>
<div class="a" style="left:1009.3px;top:344.06px;width:1px;height:14.85px;background:#d6d9dd"></div>
<div class="a" style="left:1058.7px;top:344.06px;width:1px;height:14.85px;background:#d6d9dd"></div>
<div class="a" style="left:1075px;top:344.06px;width:1px;height:14.85px;background:#d6d9dd"></div>
<div class="a" style="left:1102.9px;top:344.06px;width:1px;height:14.85px;background:#d6d9dd"></div>
<div class="a" style="left:1135.1px;top:344.06px;width:1px;height:14.85px;background:#d6d9dd"></div>
<div class="a" style="left:1178.8px;top:344.06px;width:1px;height:14.85px;background:#d6d9dd"></div>
<div class="a" style="left:155.3px;top:373.25px;width:340.2px;height:1px;background:#cad9da"></div>
<div class="a" style="left:495.5px;top:373.25px;width:715px;height:1px;background:#d1d5d9"></div>
<div class="a" style="left:298.1px;top:358.9px;width:1px;height:14.85px;background:#cddcda"></div>
<div class="a" style="left:331px;top:358.9px;width:1px;height:14.85px;background:#cddcda"></div>
<div class="a" style="left:369px;top:358.9px;width:1px;height:14.85px;background:#cddcda"></div>
<div class="a" style="left:495px;top:358.9px;width:1px;height:14.85px;background:#e6eaee"></div>
<div class="a" style="left:559.8px;top:358.9px;width:1px;height:14.85px;background:#d6d9dd"></div>
<div class="a" style="left:599.3px;top:358.9px;width:1px;height:14.85px;background:#d6d9dd"></div>
<div class="a" style="left:648.5px;top:358.9px;width:1px;height:14.85px;background:#d6d9dd"></div>
<div class="a" style="left:757.9px;top:358.9px;width:1px;height:14.85px;background:#d6d9dd"></div>
<div class="a" style="left:878px;top:358.9px;width:1px;height:14.85px;background:#d6d9dd"></div>
<div class="a" style="left:943.7px;top:358.9px;width:1px;height:14.85px;background:#d6d9dd"></div>
<div class="a" style="left:1009.3px;top:358.9px;width:1px;height:14.85px;background:#d6d9dd"></div>
<div class="a" style="left:1058.7px;top:358.9px;width:1px;height:14.85px;background:#d6d9dd"></div>
<div class="a" style="left:1075px;top:358.9px;width:1px;height:14.85px;background:#d6d9dd"></div>
<div class="a" style="left:1102.9px;top:358.9px;width:1px;height:14.85px;background:#d6d9dd"></div>
<div class="a" style="left:1135.1px;top:358.9px;width:1px;height:14.85px;background:#d6d9dd"></div>
<div class="a" style="left:1178.8px;top:358.9px;width:1px;height:14.85px;background:#d6d9dd"></div>
<div class="a" style="left:155.3px;top:388.1px;width:340.2px;height:1px;background:#cad9da"></div>
<div class="a" style="left:495.5px;top:388.1px;width:715px;height:1px;background:#d1d5d9"></div>
<div class="a" style="left:298.1px;top:373.75px;width:1px;height:14.85px;background:#cddcda"></div>
<div class="a" style="left:331px;top:373.75px;width:1px;height:14.85px;background:#cddcda"></div>
<div class="a" style="left:369px;top:373.75px;width:1px;height:14.85px;background:#cddcda"></div>
<div class="a" style="left:495px;top:373.75px;width:1px;height:14.85px;background:#e6eaee"></div>
<div class="a" style="left:559.8px;top:373.75px;width:1px;height:14.85px;background:#d6d9dd"></div>
<div class="a" style="left:599.3px;top:373.75px;width:1px;height:14.85px;background:#d6d9dd"></div>
<div class="a" style="left:648.5px;top:373.75px;width:1px;height:14.85px;background:#d6d9dd"></div>
<div class="a" style="left:757.9px;top:373.75px;width:1px;height:14.85px;background:#d6d9dd"></div>
<div class="a" style="left:878px;top:373.75px;width:1px;height:14.85px;background:#d6d9dd"></div>
<div class="a" style="left:943.7px;top:373.75px;width:1px;height:14.85px;background:#d6d9dd"></div>
<div class="a" style="left:1009.3px;top:373.75px;width:1px;height:14.85px;background:#d6d9dd"></div>
<div class="a" style="left:1058.7px;top:373.75px;width:1px;height:14.85px;background:#d6d9dd"></div>
<div class="a" style="left:1075px;top:373.75px;width:1px;height:14.85px;background:#d6d9dd"></div>
<div class="a" style="left:1102.9px;top:373.75px;width:1px;height:14.85px;background:#d6d9dd"></div>
<div class="a" style="left:1135.1px;top:373.75px;width:1px;height:14.85px;background:#d6d9dd"></div>
<div class="a" style="left:1178.8px;top:373.75px;width:1px;height:14.85px;background:#d6d9dd"></div>
<div class="a" style="left:155.3px;top:402.94px;width:340.2px;height:1px;background:#cad9da"></div>
<div class="a" style="left:495.5px;top:402.94px;width:715px;height:1px;background:#d1d5d9"></div>
<div class="a" style="left:298.1px;top:388.6px;width:1px;height:14.85px;background:#cddcda"></div>
<div class="a" style="left:331px;top:388.6px;width:1px;height:14.85px;background:#cddcda"></div>
<div class="a" style="left:369px;top:388.6px;width:1px;height:14.85px;background:#cddcda"></div>
<div class="a" style="left:495px;top:388.6px;width:1px;height:14.85px;background:#e6eaee"></div>
<div class="a" style="left:559.8px;top:388.6px;width:1px;height:14.85px;background:#d6d9dd"></div>
<div class="a" style="left:599.3px;top:388.6px;width:1px;height:14.85px;background:#d6d9dd"></div>
<div class="a" style="left:648.5px;top:388.6px;width:1px;height:14.85px;background:#d6d9dd"></div>
<div class="a" style="left:757.9px;top:388.6px;width:1px;height:14.85px;background:#d6d9dd"></div>
<div class="a" style="left:878px;top:388.6px;width:1px;height:14.85px;background:#d6d9dd"></div>
<div class="a" style="left:943.7px;top:388.6px;width:1px;height:14.85px;background:#d6d9dd"></div>
<div class="a" style="left:1009.3px;top:388.6px;width:1px;height:14.85px;background:#d6d9dd"></div>
<div class="a" style="left:1058.7px;top:388.6px;width:1px;height:14.85px;background:#d6d9dd"></div>
<div class="a" style="left:1075px;top:388.6px;width:1px;height:14.85px;background:#d6d9dd"></div>
<div class="a" style="left:1102.9px;top:388.6px;width:1px;height:14.85px;background:#d6d9dd"></div>
<div class="a" style="left:1135.1px;top:388.6px;width:1px;height:14.85px;background:#d6d9dd"></div>
<div class="a" style="left:1178.8px;top:388.6px;width:1px;height:14.85px;background:#d6d9dd"></div>
<div class="a" style="left:155.3px;top:417.79px;width:340.2px;height:1px;background:#cad9da"></div>
<div class="a" style="left:495.5px;top:417.79px;width:715px;height:1px;background:#d1d5d9"></div>
<div class="a" style="left:298.1px;top:403.44px;width:1px;height:14.85px;background:#cddcda"></div>
<div class="a" style="left:331px;top:403.44px;width:1px;height:14.85px;background:#cddcda"></div>
<div class="a" style="left:369px;top:403.44px;width:1px;height:14.85px;background:#cddcda"></div>
<div class="a" style="left:495px;top:403.44px;width:1px;height:14.85px;background:#e6eaee"></div>
<div class="a" style="left:559.8px;top:403.44px;width:1px;height:14.85px;background:#d6d9dd"></div>
<div class="a" style="left:599.3px;top:403.44px;width:1px;height:14.85px;background:#d6d9dd"></div>
<div class="a" style="left:648.5px;top:403.44px;width:1px;height:14.85px;background:#d6d9dd"></div>
<div class="a" style="left:757.9px;top:403.44px;width:1px;height:14.85px;background:#d6d9dd"></div>
<div class="a" style="left:878px;top:403.44px;width:1px;height:14.85px;background:#d6d9dd"></div>
<div class="a" style="left:943.7px;top:403.44px;width:1px;height:14.85px;background:#d6d9dd"></div>
<div class="a" style="left:1009.3px;top:403.44px;width:1px;height:14.85px;background:#d6d9dd"></div>
<div class="a" style="left:1058.7px;top:403.44px;width:1px;height:14.85px;background:#d6d9dd"></div>
<div class="a" style="left:1075px;top:403.44px;width:1px;height:14.85px;background:#d6d9dd"></div>
<div class="a" style="left:1102.9px;top:403.44px;width:1px;height:14.85px;background:#d6d9dd"></div>
<div class="a" style="left:1135.1px;top:403.44px;width:1px;height:14.85px;background:#d6d9dd"></div>
<div class="a" style="left:1178.8px;top:403.44px;width:1px;height:14.85px;background:#d6d9dd"></div>
<div class="a" style="left:495.5px;top:432.63px;width:715px;height:1px;background:#d1d5d9"></div>
<div class="a" style="left:298.1px;top:418.28px;width:1px;height:14.85px;background:#cddcda"></div>
<div class="a" style="left:331px;top:418.28px;width:1px;height:14.85px;background:#cddcda"></div>
<div class="a" style="left:369px;top:418.28px;width:1px;height:14.85px;background:#cddcda"></div>
<div class="a" style="left:495px;top:418.28px;width:1px;height:14.85px;background:#e6eaee"></div>
<div class="a" style="left:559.8px;top:418.28px;width:1px;height:14.85px;background:#d6d9dd"></div>
<div class="a" style="left:599.3px;top:418.28px;width:1px;height:14.85px;background:#d6d9dd"></div>
<div class="a" style="left:648.5px;top:418.28px;width:1px;height:14.85px;background:#d6d9dd"></div>
<div class="a" style="left:757.9px;top:418.28px;width:1px;height:14.85px;background:#d6d9dd"></div>
<div class="a" style="left:878px;top:418.28px;width:1px;height:14.85px;background:#d6d9dd"></div>
<div class="a" style="left:943.7px;top:418.28px;width:1px;height:14.85px;background:#d6d9dd"></div>
<div class="a" style="left:1009.3px;top:418.28px;width:1px;height:14.85px;background:#d6d9dd"></div>
<div class="a" style="left:1058.7px;top:418.28px;width:1px;height:14.85px;background:#d6d9dd"></div>
<div class="a" style="left:1075px;top:418.28px;width:1px;height:14.85px;background:#d6d9dd"></div>
<div class="a" style="left:1102.9px;top:418.28px;width:1px;height:14.85px;background:#d6d9dd"></div>
<div class="a" style="left:1135.1px;top:418.28px;width:1px;height:14.85px;background:#d6d9dd"></div>
<div class="a" style="left:1178.8px;top:418.28px;width:1px;height:14.85px;background:#d6d9dd"></div>
<div class="a" style="left:9px;top:447.48px;width:1201.5px;height:1px;background:#d6d8d0"></div>
<div class="a" style="left:155.3px;top:462.32px;width:340.2px;height:1px;background:#cad9da"></div>
<div class="a" style="left:495.5px;top:462.32px;width:715px;height:1px;background:#d1d5d9"></div>
<div class="a" style="left:298.1px;top:447.98px;width:1px;height:14.85px;background:#cddcda"></div>
<div class="a" style="left:331px;top:447.98px;width:1px;height:14.85px;background:#cddcda"></div>
<div class="a" style="left:369px;top:447.98px;width:1px;height:14.85px;background:#cddcda"></div>
<div class="a" style="left:495px;top:447.98px;width:1px;height:14.85px;background:#e6eaee"></div>
<div class="a" style="left:559.8px;top:447.98px;width:1px;height:14.85px;background:#d6d9dd"></div>
<div class="a" style="left:599.3px;top:447.98px;width:1px;height:14.85px;background:#d6d9dd"></div>
<div class="a" style="left:648.5px;top:447.98px;width:1px;height:14.85px;background:#d6d9dd"></div>
<div class="a" style="left:757.9px;top:447.98px;width:1px;height:14.85px;background:#d6d9dd"></div>
<div class="a" style="left:878px;top:447.98px;width:1px;height:14.85px;background:#d6d9dd"></div>
<div class="a" style="left:943.7px;top:447.98px;width:1px;height:14.85px;background:#d6d9dd"></div>
<div class="a" style="left:1009.3px;top:447.98px;width:1px;height:14.85px;background:#d6d9dd"></div>
<div class="a" style="left:1058.7px;top:447.98px;width:1px;height:14.85px;background:#d6d9dd"></div>
<div class="a" style="left:1075px;top:447.98px;width:1px;height:14.85px;background:#d6d9dd"></div>
<div class="a" style="left:1102.9px;top:447.98px;width:1px;height:14.85px;background:#d6d9dd"></div>
<div class="a" style="left:1135.1px;top:447.98px;width:1px;height:14.85px;background:#d6d9dd"></div>
<div class="a" style="left:1178.8px;top:447.98px;width:1px;height:14.85px;background:#d6d9dd"></div>
<div class="a" style="left:155.3px;top:477.17px;width:340.2px;height:1px;background:#cad9da"></div>
<div class="a" style="left:495.5px;top:477.17px;width:715px;height:1px;background:#d1d5d9"></div>
<div class="a" style="left:298.1px;top:462.82px;width:1px;height:14.85px;background:#cddcda"></div>
<div class="a" style="left:331px;top:462.82px;width:1px;height:14.85px;background:#cddcda"></div>
<div class="a" style="left:369px;top:462.82px;width:1px;height:14.85px;background:#cddcda"></div>
<div class="a" style="left:495px;top:462.82px;width:1px;height:14.85px;background:#e6eaee"></div>
<div class="a" style="left:559.8px;top:462.82px;width:1px;height:14.85px;background:#d6d9dd"></div>
<div class="a" style="left:599.3px;top:462.82px;width:1px;height:14.85px;background:#d6d9dd"></div>
<div class="a" style="left:648.5px;top:462.82px;width:1px;height:14.85px;background:#d6d9dd"></div>
<div class="a" style="left:757.9px;top:462.82px;width:1px;height:14.85px;background:#d6d9dd"></div>
<div class="a" style="left:878px;top:462.82px;width:1px;height:14.85px;background:#d6d9dd"></div>
<div class="a" style="left:943.7px;top:462.82px;width:1px;height:14.85px;background:#d6d9dd"></div>
<div class="a" style="left:1009.3px;top:462.82px;width:1px;height:14.85px;background:#d6d9dd"></div>
<div class="a" style="left:1058.7px;top:462.82px;width:1px;height:14.85px;background:#d6d9dd"></div>
<div class="a" style="left:1075px;top:462.82px;width:1px;height:14.85px;background:#d6d9dd"></div>
<div class="a" style="left:1102.9px;top:462.82px;width:1px;height:14.85px;background:#d6d9dd"></div>
<div class="a" style="left:1135.1px;top:462.82px;width:1px;height:14.85px;background:#d6d9dd"></div>
<div class="a" style="left:1178.8px;top:462.82px;width:1px;height:14.85px;background:#d6d9dd"></div>
<div class="a" style="left:495.5px;top:492.01px;width:715px;height:1px;background:#d1d5d9"></div>
<div class="a" style="left:298.1px;top:477.66px;width:1px;height:14.85px;background:#cddcda"></div>
<div class="a" style="left:331px;top:477.66px;width:1px;height:14.85px;background:#cddcda"></div>
<div class="a" style="left:369px;top:477.66px;width:1px;height:14.85px;background:#cddcda"></div>
<div class="a" style="left:495px;top:477.66px;width:1px;height:14.85px;background:#e6eaee"></div>
<div class="a" style="left:559.8px;top:477.66px;width:1px;height:14.85px;background:#d6d9dd"></div>
<div class="a" style="left:599.3px;top:477.66px;width:1px;height:14.85px;background:#d6d9dd"></div>
<div class="a" style="left:648.5px;top:477.66px;width:1px;height:14.85px;background:#d6d9dd"></div>
<div class="a" style="left:757.9px;top:477.66px;width:1px;height:14.85px;background:#d6d9dd"></div>
<div class="a" style="left:878px;top:477.66px;width:1px;height:14.85px;background:#d6d9dd"></div>
<div class="a" style="left:943.7px;top:477.66px;width:1px;height:14.85px;background:#d6d9dd"></div>
<div class="a" style="left:1009.3px;top:477.66px;width:1px;height:14.85px;background:#d6d9dd"></div>
<div class="a" style="left:1058.7px;top:477.66px;width:1px;height:14.85px;background:#d6d9dd"></div>
<div class="a" style="left:1075px;top:477.66px;width:1px;height:14.85px;background:#d6d9dd"></div>
<div class="a" style="left:1102.9px;top:477.66px;width:1px;height:14.85px;background:#d6d9dd"></div>
<div class="a" style="left:1135.1px;top:477.66px;width:1px;height:14.85px;background:#d6d9dd"></div>
<div class="a" style="left:1178.8px;top:477.66px;width:1px;height:14.85px;background:#d6d9dd"></div>
<div class="a" style="left:9px;top:506.86px;width:1201.5px;height:1px;background:#d6d8d0"></div>
<div class="a" style="left:155.3px;top:521.7px;width:340.2px;height:1px;background:#cad9da"></div>
<div class="a" style="left:495.5px;top:521.7px;width:715px;height:1px;background:#d1d5d9"></div>
<div class="a" style="left:298.1px;top:507.36px;width:1px;height:14.85px;background:#cddcda"></div>
<div class="a" style="left:331px;top:507.36px;width:1px;height:14.85px;background:#cddcda"></div>
<div class="a" style="left:369px;top:507.36px;width:1px;height:14.85px;background:#cddcda"></div>
<div class="a" style="left:495px;top:507.36px;width:1px;height:14.85px;background:#e6eaee"></div>
<div class="a" style="left:559.8px;top:507.36px;width:1px;height:14.85px;background:#d6d9dd"></div>
<div class="a" style="left:599.3px;top:507.36px;width:1px;height:14.85px;background:#d6d9dd"></div>
<div class="a" style="left:648.5px;top:507.36px;width:1px;height:14.85px;background:#d6d9dd"></div>
<div class="a" style="left:757.9px;top:507.36px;width:1px;height:14.85px;background:#d6d9dd"></div>
<div class="a" style="left:878px;top:507.36px;width:1px;height:14.85px;background:#d6d9dd"></div>
<div class="a" style="left:943.7px;top:507.36px;width:1px;height:14.85px;background:#d6d9dd"></div>
<div class="a" style="left:1009.3px;top:507.36px;width:1px;height:14.85px;background:#d6d9dd"></div>
<div class="a" style="left:1058.7px;top:507.36px;width:1px;height:14.85px;background:#d6d9dd"></div>
<div class="a" style="left:1075px;top:507.36px;width:1px;height:14.85px;background:#d6d9dd"></div>
<div class="a" style="left:1102.9px;top:507.36px;width:1px;height:14.85px;background:#d6d9dd"></div>
<div class="a" style="left:1135.1px;top:507.36px;width:1px;height:14.85px;background:#d6d9dd"></div>
<div class="a" style="left:1178.8px;top:507.36px;width:1px;height:14.85px;background:#d6d9dd"></div>
<div class="a" style="left:155.3px;top:536.55px;width:340.2px;height:1px;background:#cad9da"></div>
<div class="a" style="left:495.5px;top:536.55px;width:715px;height:1px;background:#d1d5d9"></div>
<div class="a" style="left:298.1px;top:522.2px;width:1px;height:14.85px;background:#cddcda"></div>
<div class="a" style="left:331px;top:522.2px;width:1px;height:14.85px;background:#cddcda"></div>
<div class="a" style="left:369px;top:522.2px;width:1px;height:14.85px;background:#cddcda"></div>
<div class="a" style="left:495px;top:522.2px;width:1px;height:14.85px;background:#e6eaee"></div>
<div class="a" style="left:559.8px;top:522.2px;width:1px;height:14.85px;background:#d6d9dd"></div>
<div class="a" style="left:599.3px;top:522.2px;width:1px;height:14.85px;background:#d6d9dd"></div>
<div class="a" style="left:648.5px;top:522.2px;width:1px;height:14.85px;background:#d6d9dd"></div>
<div class="a" style="left:757.9px;top:522.2px;width:1px;height:14.85px;background:#d6d9dd"></div>
<div class="a" style="left:878px;top:522.2px;width:1px;height:14.85px;background:#d6d9dd"></div>
<div class="a" style="left:943.7px;top:522.2px;width:1px;height:14.85px;background:#d6d9dd"></div>
<div class="a" style="left:1009.3px;top:522.2px;width:1px;height:14.85px;background:#d6d9dd"></div>
<div class="a" style="left:1058.7px;top:522.2px;width:1px;height:14.85px;background:#d6d9dd"></div>
<div class="a" style="left:1075px;top:522.2px;width:1px;height:14.85px;background:#d6d9dd"></div>
<div class="a" style="left:1102.9px;top:522.2px;width:1px;height:14.85px;background:#d6d9dd"></div>
<div class="a" style="left:1135.1px;top:522.2px;width:1px;height:14.85px;background:#d6d9dd"></div>
<div class="a" style="left:1178.8px;top:522.2px;width:1px;height:14.85px;background:#d6d9dd"></div>
<div class="a" style="left:155.3px;top:551.39px;width:340.2px;height:1px;background:#cad9da"></div>
<div class="a" style="left:495.5px;top:551.39px;width:715px;height:1px;background:#d1d5d9"></div>
<div class="a" style="left:298.1px;top:537.04px;width:1px;height:14.85px;background:#cddcda"></div>
<div class="a" style="left:331px;top:537.04px;width:1px;height:14.85px;background:#cddcda"></div>
<div class="a" style="left:369px;top:537.04px;width:1px;height:14.85px;background:#cddcda"></div>
<div class="a" style="left:495px;top:537.04px;width:1px;height:14.85px;background:#e6eaee"></div>
<div class="a" style="left:559.8px;top:537.04px;width:1px;height:14.85px;background:#d6d9dd"></div>
<div class="a" style="left:599.3px;top:537.04px;width:1px;height:14.85px;background:#d6d9dd"></div>
<div class="a" style="left:648.5px;top:537.04px;width:1px;height:14.85px;background:#d6d9dd"></div>
<div class="a" style="left:757.9px;top:537.04px;width:1px;height:14.85px;background:#d6d9dd"></div>
<div class="a" style="left:878px;top:537.04px;width:1px;height:14.85px;background:#d6d9dd"></div>
<div class="a" style="left:943.7px;top:537.04px;width:1px;height:14.85px;background:#d6d9dd"></div>
<div class="a" style="left:1009.3px;top:537.04px;width:1px;height:14.85px;background:#d6d9dd"></div>
<div class="a" style="left:1058.7px;top:537.04px;width:1px;height:14.85px;background:#d6d9dd"></div>
<div class="a" style="left:1075px;top:537.04px;width:1px;height:14.85px;background:#d6d9dd"></div>
<div class="a" style="left:1102.9px;top:537.04px;width:1px;height:14.85px;background:#d6d9dd"></div>
<div class="a" style="left:1135.1px;top:537.04px;width:1px;height:14.85px;background:#d6d9dd"></div>
<div class="a" style="left:1178.8px;top:537.04px;width:1px;height:14.85px;background:#d6d9dd"></div>
<div class="a" style="left:155.3px;top:566.24px;width:340.2px;height:1px;background:#cad9da"></div>
<div class="a" style="left:495.5px;top:566.24px;width:715px;height:1px;background:#d1d5d9"></div>
<div class="a" style="left:298.1px;top:551.89px;width:1px;height:14.85px;background:#cddcda"></div>
<div class="a" style="left:331px;top:551.89px;width:1px;height:14.85px;background:#cddcda"></div>
<div class="a" style="left:369px;top:551.89px;width:1px;height:14.85px;background:#cddcda"></div>
<div class="a" style="left:495px;top:551.89px;width:1px;height:14.85px;background:#e6eaee"></div>
<div class="a" style="left:559.8px;top:551.89px;width:1px;height:14.85px;background:#d6d9dd"></div>
<div class="a" style="left:599.3px;top:551.89px;width:1px;height:14.85px;background:#d6d9dd"></div>
<div class="a" style="left:648.5px;top:551.89px;width:1px;height:14.85px;background:#d6d9dd"></div>
<div class="a" style="left:757.9px;top:551.89px;width:1px;height:14.85px;background:#d6d9dd"></div>
<div class="a" style="left:878px;top:551.89px;width:1px;height:14.85px;background:#d6d9dd"></div>
<div class="a" style="left:943.7px;top:551.89px;width:1px;height:14.85px;background:#d6d9dd"></div>
<div class="a" style="left:1009.3px;top:551.89px;width:1px;height:14.85px;background:#d6d9dd"></div>
<div class="a" style="left:1058.7px;top:551.89px;width:1px;height:14.85px;background:#d6d9dd"></div>
<div class="a" style="left:1075px;top:551.89px;width:1px;height:14.85px;background:#d6d9dd"></div>
<div class="a" style="left:1102.9px;top:551.89px;width:1px;height:14.85px;background:#d6d9dd"></div>
<div class="a" style="left:1135.1px;top:551.89px;width:1px;height:14.85px;background:#d6d9dd"></div>
<div class="a" style="left:1178.8px;top:551.89px;width:1px;height:14.85px;background:#d6d9dd"></div>
<div class="a" style="left:155.3px;top:581.08px;width:340.2px;height:1px;background:#cad9da"></div>
<div class="a" style="left:495.5px;top:581.08px;width:715px;height:1px;background:#d1d5d9"></div>
<div class="a" style="left:298.1px;top:566.74px;width:1px;height:14.85px;background:#cddcda"></div>
<div class="a" style="left:331px;top:566.74px;width:1px;height:14.85px;background:#cddcda"></div>
<div class="a" style="left:369px;top:566.74px;width:1px;height:14.85px;background:#cddcda"></div>
<div class="a" style="left:495px;top:566.74px;width:1px;height:14.85px;background:#e6eaee"></div>
<div class="a" style="left:559.8px;top:566.74px;width:1px;height:14.85px;background:#d6d9dd"></div>
<div class="a" style="left:599.3px;top:566.74px;width:1px;height:14.85px;background:#d6d9dd"></div>
<div class="a" style="left:648.5px;top:566.74px;width:1px;height:14.85px;background:#d6d9dd"></div>
<div class="a" style="left:757.9px;top:566.74px;width:1px;height:14.85px;background:#d6d9dd"></div>
<div class="a" style="left:878px;top:566.74px;width:1px;height:14.85px;background:#d6d9dd"></div>
<div class="a" style="left:943.7px;top:566.74px;width:1px;height:14.85px;background:#d6d9dd"></div>
<div class="a" style="left:1009.3px;top:566.74px;width:1px;height:14.85px;background:#d6d9dd"></div>
<div class="a" style="left:1058.7px;top:566.74px;width:1px;height:14.85px;background:#d6d9dd"></div>
<div class="a" style="left:1075px;top:566.74px;width:1px;height:14.85px;background:#d6d9dd"></div>
<div class="a" style="left:1102.9px;top:566.74px;width:1px;height:14.85px;background:#d6d9dd"></div>
<div class="a" style="left:1135.1px;top:566.74px;width:1px;height:14.85px;background:#d6d9dd"></div>
<div class="a" style="left:1178.8px;top:566.74px;width:1px;height:14.85px;background:#d6d9dd"></div>
<div class="a" style="left:495.5px;top:595.93px;width:715px;height:1px;background:#d1d5d9"></div>
<div class="a" style="left:298.1px;top:581.58px;width:1px;height:14.85px;background:#cddcda"></div>
<div class="a" style="left:331px;top:581.58px;width:1px;height:14.85px;background:#cddcda"></div>
<div class="a" style="left:369px;top:581.58px;width:1px;height:14.85px;background:#cddcda"></div>
<div class="a" style="left:495px;top:581.58px;width:1px;height:14.85px;background:#e6eaee"></div>
<div class="a" style="left:559.8px;top:581.58px;width:1px;height:14.85px;background:#d6d9dd"></div>
<div class="a" style="left:599.3px;top:581.58px;width:1px;height:14.85px;background:#d6d9dd"></div>
<div class="a" style="left:648.5px;top:581.58px;width:1px;height:14.85px;background:#d6d9dd"></div>
<div class="a" style="left:757.9px;top:581.58px;width:1px;height:14.85px;background:#d6d9dd"></div>
<div class="a" style="left:878px;top:581.58px;width:1px;height:14.85px;background:#d6d9dd"></div>
<div class="a" style="left:943.7px;top:581.58px;width:1px;height:14.85px;background:#d6d9dd"></div>
<div class="a" style="left:1009.3px;top:581.58px;width:1px;height:14.85px;background:#d6d9dd"></div>
<div class="a" style="left:1058.7px;top:581.58px;width:1px;height:14.85px;background:#d6d9dd"></div>
<div class="a" style="left:1075px;top:581.58px;width:1px;height:14.85px;background:#d6d9dd"></div>
<div class="a" style="left:1102.9px;top:581.58px;width:1px;height:14.85px;background:#d6d9dd"></div>
<div class="a" style="left:1135.1px;top:581.58px;width:1px;height:14.85px;background:#d6d9dd"></div>
<div class="a" style="left:1178.8px;top:581.58px;width:1px;height:14.85px;background:#d6d9dd"></div>
<div class="a" style="left:9px;top:610.77px;width:1201.5px;height:1px;background:#d6d8d0"></div>
<div class="a" style="left:154px;top:76.85px;width:2px;height:515.55px;background:#f6e8aa"></div>
<div class="a" style="left:1210px;top:76.85px;width:1px;height:515.55px;background:#d5d8dc"></div>
<div class="a" style="left:1211px;top:76.85px;width:3px;height:515.55px;background:#f7f7f7"></div>
<div class="a" style="left:9px;top:76.25px;width:1201.5px;height:1px;background:#d9d9d9"></div>
<div class="a" style="left:9px;top:76.85px;width:1px;height:515.55px;background:#e9ecc8"></div>
<div class="t" style="left:12.6px;top:79px;transform:scaleX(0.941)">P001-10912-GE0101-1004-WB</div>
<div class="t" style="left:158.9px;top:79px;transform:scaleX(0.956)">Südstraße 115,1,M, Bad</div>
<div class="t" style="left:302.2px;top:79px;transform:scaleX(0.951)">0060</div>
<div class="t" style="left:335.1px;top:79px;transform:scaleX(0.840)">SOSK</div>
<div class="t" style="left:373.1px;top:79px;transform:scaleX(0.928)">Spülkasten</div>
<div class="t" style="left:499.1px;top:79px;transform:scaleX(0.973)">13.08.1998</div>
<div class="t" style="left:603.4px;top:79px;transform:scaleX(0.907)">Nein</div>
<div class="t" style="left:652.6px;top:79px;transform:scaleX(0.910)">SOSK2 Wandeinbau</div>
<div class="t r" style="right:188.4px;top:79px;transform:scaleX(0.980);transform-origin:100% 0">0,00</div>
<div class="t r" style="right:111.9px;top:79px;transform:scaleX(0.951);transform-origin:100% 0">0</div>
<div class="t" style="left:158.9px;top:93.82px;transform:scaleX(0.956)">Südstraße 115,1,M, Bad</div>
<div class="t" style="left:302.2px;top:93.82px;transform:scaleX(0.951)">0070</div>
<div class="t" style="left:335.1px;top:93.82px;transform:scaleX(0.840)">SOWB</div>
<div class="t" style="left:373.1px;top:93.82px;transform:scaleX(0.923)">Waschbecken</div>
<div class="t" style="left:499.1px;top:93.82px;transform:scaleX(0.973)">01.01.1920</div>
<div class="t" style="left:603.4px;top:93.82px;transform:scaleX(0.907)">Nein</div>
<div class="t" style="left:652.6px;top:93.82px;transform:scaleX(0.909)">SOWB1 Waschbecken</div>
<div class="t r" style="right:188.4px;top:93.82px;transform:scaleX(0.980);transform-origin:100% 0">0,00</div>
<div class="t r" style="right:111.9px;top:93.82px;transform:scaleX(0.951);transform-origin:100% 0">0</div>
<div class="t" style="left:158.9px;top:108.64px;transform:scaleX(0.956)">Südstraße 115,1,M, Bad</div>
<div class="t" style="left:302.2px;top:108.64px;transform:scaleX(0.951)">0080</div>
<div class="t" style="left:335.1px;top:108.64px;transform:scaleX(0.840)">SOWC</div>
<div class="t" style="left:373.1px;top:108.64px;transform:scaleX(0.908)">WC-Becken</div>
<div class="t" style="left:499.1px;top:108.64px;transform:scaleX(0.973)">13.08.1998</div>
<div class="t" style="left:603.4px;top:108.64px;transform:scaleX(0.907)">Nein</div>
<div class="t" style="left:652.6px;top:108.64px;transform:scaleX(0.918)">SOWC2 wandhängend</div>
<div class="t" style="left:762px;top:108.64px;transform:scaleX(0.885)">SOWC2 KERAMAG Renova</div>
<div class="t r" style="right:188.4px;top:108.64px;transform:scaleX(0.980);transform-origin:100% 0">0,00</div>
<div class="t r" style="right:111.9px;top:108.64px;transform:scaleX(0.951);transform-origin:100% 0">0</div>
<div class="t" style="left:12.5px;top:123.46px;transform:scaleX(0.954)">P001-10912-GE0101-1004-</div>
<div class="t" style="left:130px;top:125.46px;font-size:7px;-webkit-text-stroke:0;letter-spacing:-0.3px">...</div>
<svg class="a" style="left:144.5px;top:123.98px" width="12" height="10" viewBox="0 0 12 10"><path d="M3.5 0.8 H7.5 V5.2 H10.3 V8.8 H0.8 V5.2 H3.5 Z" fill="#fbfbf0" stroke="#5e5a2a" stroke-width="1.2"/></svg>
<div class="a" style="left:1105.8px;top:127.58px;width:3px;height:3px;background:#7a7420"></div>
<div class="t r" style="right:110.7px;top:123.46px;font-weight:bold;font-size:10px;-webkit-text-stroke:0.2px #111;color:#111">0</div>
<div class="t" style="left:12.6px;top:138.28px;transform:scaleX(0.941)">P001-10912-GE0101-1004-WK</div>
<div class="t" style="left:158.9px;top:138.28px;transform:scaleX(0.955)">Südstraße 115,1,M, Küche</div>
<div class="t" style="left:302.2px;top:138.28px;transform:scaleX(0.951)">0030</div>
<div class="t" style="left:335.1px;top:138.28px;transform:scaleX(0.840)">SMB</div>
<div class="t" style="left:373.1px;top:138.28px;transform:scaleX(0.932)">Mischbatterie</div>
<div class="t" style="left:499.1px;top:138.28px;transform:scaleX(0.973)">01.01.1920</div>
<div class="t" style="left:603.4px;top:138.28px;transform:scaleX(0.907)">Nein</div>
<div class="t" style="left:652.6px;top:138.28px;transform:scaleX(0.925)">SMB07 Spültisch-Einh</div>
<div class="t r" style="right:188.4px;top:138.28px;transform:scaleX(0.980);transform-origin:100% 0">0,00</div>
<div class="t r" style="right:111.9px;top:138.28px;transform:scaleX(0.951);transform-origin:100% 0">0</div>
<div class="t" style="left:158.9px;top:153.1px;transform:scaleX(0.955)">Südstraße 115,1,M, Küche</div>
<div class="t" style="left:302.2px;top:153.1px;transform:scaleX(0.951)">0020</div>
<div class="t" style="left:335.1px;top:153.1px;transform:scaleX(0.840)">HHK</div>
<div class="t" style="left:373.1px;top:153.1px;transform:scaleX(0.930)">Heizkörper</div>
<div class="t" style="left:499.1px;top:153.1px;transform:scaleX(0.973)">13.08.1998</div>
<div class="t" style="left:603.4px;top:153.1px;transform:scaleX(0.907)">Nein</div>
<div class="t" style="left:652.6px;top:153.1px;transform:scaleX(0.925)">HHK1 Plattenheizkörp</div>
<div class="t r" style="right:188.4px;top:153.1px;transform:scaleX(0.980);transform-origin:100% 0">0,00</div>
<div class="t r" style="right:111.9px;top:153.1px;transform:scaleX(0.951);transform-origin:100% 0">0</div>
<div class="t" style="left:158.9px;top:167.92px;transform:scaleX(0.955)">Südstraße 115,1,M, Küche</div>
<div class="t" style="left:302.2px;top:167.92px;transform:scaleX(0.951)">0010</div>
<div class="t" style="left:335.1px;top:167.92px;transform:scaleX(0.840)">FB</div>
<div class="t" style="left:373.1px;top:167.92px;transform:scaleX(0.925)">Fußboden</div>
<div class="t" style="left:499.1px;top:167.92px;transform:scaleX(0.973)">01.01.1920</div>
<div class="t" style="left:603.4px;top:167.92px;transform:scaleX(0.907)">Nein</div>
<div class="t" style="left:652.6px;top:167.92px;transform:scaleX(0.924)">FB07 Dielen</div>
<div class="t r" style="right:188.4px;top:167.92px;transform:scaleX(0.980);transform-origin:100% 0">0,00</div>
<div class="t r" style="right:111.9px;top:167.92px;transform:scaleX(0.951);transform-origin:100% 0">0</div>
<div class="t" style="left:12.5px;top:182.74px;transform:scaleX(0.954)">P001-10912-GE0101-1004-</div>
<div class="t" style="left:130px;top:184.74px;font-size:7px;-webkit-text-stroke:0;letter-spacing:-0.3px">...</div>
<svg class="a" style="left:144.5px;top:183.36px" width="12" height="10" viewBox="0 0 12 10"><path d="M3.5 0.8 H7.5 V5.2 H10.3 V8.8 H0.8 V5.2 H3.5 Z" fill="#fbfbf0" stroke="#5e5a2a" stroke-width="1.2"/></svg>
<div class="a" style="left:1105.8px;top:186.96px;width:3px;height:3px;background:#7a7420"></div>
<div class="t r" style="right:110.7px;top:182.74px;font-weight:bold;font-size:10px;-webkit-text-stroke:0.2px #111;color:#111">0</div>
<div class="t" style="left:12.6px;top:197.56px;transform:scaleX(0.940)">P001-10912-GE0101-1004-WR</div>
<div class="t" style="left:158.9px;top:197.56px;transform:scaleX(0.951)">Südstraße 115,1,M, Wohnraum</div>
<div class="t" style="left:302.2px;top:197.56px;transform:scaleX(0.951)">0070</div>
<div class="t" style="left:335.1px;top:197.56px;transform:scaleX(0.840)">HHK</div>
<div class="t" style="left:373.1px;top:197.56px;transform:scaleX(0.930)">Heizkörper</div>
<div class="t" style="left:499.1px;top:197.56px;transform:scaleX(0.973)">13.08.1998</div>
<div class="t" style="left:603.4px;top:197.56px;transform:scaleX(0.907)">Nein</div>
<div class="t" style="left:652.6px;top:197.56px;transform:scaleX(0.925)">HHK1 Plattenheizkörp</div>
<div class="t r" style="right:188.4px;top:197.56px;transform:scaleX(0.980);transform-origin:100% 0">0,00</div>
<div class="t r" style="right:111.9px;top:197.56px;transform:scaleX(0.951);transform-origin:100% 0">0</div>
<div class="t" style="left:158.9px;top:212.38px;transform:scaleX(0.951)">Südstraße 115,1,M, Wohnraum</div>
<div class="t" style="left:302.2px;top:212.38px;transform:scaleX(0.951)">0060</div>
<div class="t" style="left:335.1px;top:212.38px;transform:scaleX(0.840)">FB</div>
<div class="t" style="left:373.1px;top:212.38px;transform:scaleX(0.925)">Fußboden</div>
<div class="t" style="left:499.1px;top:212.38px;transform:scaleX(0.973)">01.01.1920</div>
<div class="t" style="left:603.4px;top:212.38px;transform:scaleX(0.907)">Nein</div>
<div class="t" style="left:652.6px;top:212.38px;transform:scaleX(0.924)">FB07 Dielen</div>
<div class="t r" style="right:188.4px;top:212.38px;transform:scaleX(0.980);transform-origin:100% 0">0,00</div>
<div class="t r" style="right:111.9px;top:212.38px;transform:scaleX(0.951);transform-origin:100% 0">0</div>
<div class="t" style="left:158.9px;top:227.2px;transform:scaleX(0.951)">Südstraße 115,1,M, Wohnraum</div>
<div class="t" style="left:302.2px;top:227.2px;transform:scaleX(0.951)">0050</div>
<div class="t" style="left:335.1px;top:227.2px;transform:scaleX(0.840)">HHK</div>
<div class="t" style="left:373.1px;top:227.2px;transform:scaleX(0.930)">Heizkörper</div>
<div class="t" style="left:603.4px;top:227.2px;transform:scaleX(0.907)">Nein</div>
<div class="t r" style="right:188.4px;top:227.2px;transform:scaleX(0.980);transform-origin:100% 0">0,00</div>
<div class="t r" style="right:111.9px;top:227.2px;transform:scaleX(0.951);transform-origin:100% 0">0</div>
<div class="t" style="left:158.9px;top:242.02px;transform:scaleX(0.951)">Südstraße 115,1,M, Wohnraum</div>
<div class="t" style="left:302.2px;top:242.02px;transform:scaleX(0.951)">0040</div>
<div class="t" style="left:335.1px;top:242.02px;transform:scaleX(0.840)">HHK</div>
<div class="t" style="left:373.1px;top:242.02px;transform:scaleX(0.930)">Heizkörper</div>
<div class="t" style="left:499.1px;top:242.02px;transform:scaleX(0.973)">13.08.1998</div>
<div class="t" style="left:603.4px;top:242.02px;transform:scaleX(0.907)">Nein</div>
<div class="t" style="left:652.6px;top:242.02px;transform:scaleX(0.863)">HHK1</div>
<div class="t r" style="right:188.4px;top:242.02px;transform:scaleX(0.980);transform-origin:100% 0">0,00</div>
<div class="t r" style="right:111.9px;top:242.02px;transform:scaleX(0.951);transform-origin:100% 0">0</div>
<div class="t" style="left:158.9px;top:256.84px;transform:scaleX(0.951)">Südstraße 115,1,M, Wohnraum</div>
<div class="t" style="left:302.2px;top:256.84px;transform:scaleX(0.951)">0030</div>
<div class="t" style="left:335.1px;top:256.84px;transform:scaleX(0.840)">FB</div>
<div class="t" style="left:373.1px;top:256.84px;transform:scaleX(0.925)">Fußboden</div>
<div class="t" style="left:499.1px;top:256.84px;transform:scaleX(0.973)">01.01.1920</div>
<div class="t" style="left:603.4px;top:256.84px;transform:scaleX(0.907)">Nein</div>
<div class="t" style="left:652.6px;top:256.84px;transform:scaleX(0.924)">FB07 Dielen</div>
<div class="t r" style="right:188.4px;top:256.84px;transform:scaleX(0.980);transform-origin:100% 0">0,00</div>
<div class="t r" style="right:111.9px;top:256.84px;transform:scaleX(0.951);transform-origin:100% 0">0</div>
<div class="t" style="left:158.9px;top:271.66px;transform:scaleX(0.951)">Südstraße 115,1,M, Wohnraum</div>
<div class="t" style="left:302.2px;top:271.66px;transform:scaleX(0.951)">0020</div>
<div class="t" style="left:335.1px;top:271.66px;transform:scaleX(0.840)">HHK</div>
<div class="t" style="left:373.1px;top:271.66px;transform:scaleX(0.930)">Heizkörper</div>
<div class="t" style="left:499.1px;top:271.66px;transform:scaleX(0.973)">13.08.1998</div>
<div class="t" style="left:603.4px;top:271.66px;transform:scaleX(0.907)">Nein</div>
<div class="t" style="left:652.6px;top:271.66px;transform:scaleX(0.925)">HHK1 Plattenheizkörp</div>
<div class="t r" style="right:188.4px;top:271.66px;transform:scaleX(0.980);transform-origin:100% 0">0,00</div>
<div class="t r" style="right:111.9px;top:271.66px;transform:scaleX(0.951);transform-origin:100% 0">0</div>
<div class="t" style="left:158.9px;top:286.48px;transform:scaleX(0.951)">Südstraße 115,1,M, Wohnraum</div>
<div class="t" style="left:302.2px;top:286.48px;transform:scaleX(0.951)">0010</div>
<div class="t" style="left:335.1px;top:286.48px;transform:scaleX(0.840)">FB</div>
<div class="t" style="left:373.1px;top:286.48px;transform:scaleX(0.925)">Fußboden</div>
<div class="t" style="left:499.1px;top:286.48px;transform:scaleX(0.973)">01.01.1920</div>
<div class="t" style="left:603.4px;top:286.48px;transform:scaleX(0.907)">Nein</div>
<div class="t" style="left:652.6px;top:286.48px;transform:scaleX(0.924)">FB07 Dielen</div>
<div class="t r" style="right:188.4px;top:286.48px;transform:scaleX(0.980);transform-origin:100% 0">0,00</div>
<div class="t r" style="right:111.9px;top:286.48px;transform:scaleX(0.951);transform-origin:100% 0">0</div>
<div class="t" style="left:12.5px;top:301.3px;transform:scaleX(0.954)">P001-10912-GE0101-1004-</div>
<div class="t" style="left:130px;top:303.3px;font-size:7px;-webkit-text-stroke:0;letter-spacing:-0.3px">...</div>
<svg class="a" style="left:144.5px;top:302.12px" width="12" height="10" viewBox="0 0 12 10"><path d="M3.5 0.8 H7.5 V5.2 H10.3 V8.8 H0.8 V5.2 H3.5 Z" fill="#fbfbf0" stroke="#5e5a2a" stroke-width="1.2"/></svg>
<div class="a" style="left:1105.8px;top:305.72px;width:3px;height:3px;background:#7a7420"></div>
<div class="t r" style="right:110.7px;top:301.3px;font-weight:bold;font-size:10px;-webkit-text-stroke:0.2px #111;color:#111">0</div>
<div class="t" style="left:12.6px;top:316.12px;transform:scaleX(0.941)">P001-10912-GE0101-1005-WB</div>
<div class="t" style="left:158.9px;top:316.12px;transform:scaleX(0.959)">Südstraße 115,2,L, Bad</div>
<div class="t" style="left:302.2px;top:316.12px;transform:scaleX(0.951)">0080</div>
<div class="t" style="left:335.1px;top:316.12px;transform:scaleX(0.840)">SOWC</div>
<div class="t" style="left:373.1px;top:316.12px;transform:scaleX(0.908)">WC-Becken</div>
<div class="t" style="left:499.1px;top:316.12px;transform:scaleX(0.973)">13.08.1998</div>
<div class="t" style="left:603.4px;top:316.12px;transform:scaleX(0.907)">Nein</div>
<div class="t" style="left:652.6px;top:316.12px;transform:scaleX(0.918)">SOWC2 wandhängend</div>
<div class="t" style="left:762px;top:316.12px;transform:scaleX(0.885)">SOWC2 KERAMAG Renova</div>
<div class="t r" style="right:188.4px;top:316.12px;transform:scaleX(0.980);transform-origin:100% 0">0,00</div>
<div class="t r" style="right:111.9px;top:316.12px;transform:scaleX(0.951);transform-origin:100% 0">0</div>
<div class="t" style="left:158.9px;top:330.94px;transform:scaleX(0.959)">Südstraße 115,2,L, Bad</div>
<div class="t" style="left:302.2px;top:330.94px;transform:scaleX(0.951)">0070</div>
<div class="t" style="left:335.1px;top:330.94px;transform:scaleX(0.840)">SOWB</div>
<div class="t" style="left:373.1px;top:330.94px;transform:scaleX(0.923)">Waschbecken</div>
<div class="t" style="left:499.1px;top:330.94px;transform:scaleX(0.973)">13.08.1998</div>
<div class="t" style="left:603.4px;top:330.94px;transform:scaleX(0.907)">Nein</div>
<div class="t" style="left:652.6px;top:330.94px;transform:scaleX(0.909)">SOWB1 Waschbecken</div>
<div class="t" style="left:762px;top:330.94px;transform:scaleX(0.885)">SOWB1 KERAMAG Renova</div>
<div class="t" style="left:882.1px;top:330.94px;transform:scaleX(0.973)">13.08.1998</div>
<div class="t" style="left:947.8px;top:330.94px;transform:scaleX(0.973)">31.12.2015</div>
<div class="t r" style="right:188.4px;top:330.94px;transform:scaleX(0.980);transform-origin:100% 0">0,00</div>
<div class="t r" style="right:111.9px;top:330.94px;transform:scaleX(0.951);transform-origin:100% 0">0</div>
<div class="t" style="left:158.9px;top:345.76px;transform:scaleX(0.959)">Südstraße 115,2,L, Bad</div>
<div class="t" style="left:302.2px;top:345.76px;transform:scaleX(0.951)">0060</div>
<div class="t" style="left:335.1px;top:345.76px;transform:scaleX(0.840)">SOSK</div>
<div class="t" style="left:373.1px;top:345.76px;transform:scaleX(0.928)">Spülkasten</div>
<div class="t" style="left:499.1px;top:345.76px;transform:scaleX(0.973)">13.08.1998</div>
<div class="t" style="left:603.4px;top:345.76px;transform:scaleX(0.907)">Nein</div>
<div class="t" style="left:652.6px;top:345.76px;transform:scaleX(0.910)">SOSK2 Wandeinbau</div>
<div class="t r" style="right:188.4px;top:345.76px;transform:scaleX(0.980);transform-origin:100% 0">0,00</div>
<div class="t r" style="right:111.9px;top:345.76px;transform:scaleX(0.951);transform-origin:100% 0">0</div>
<div class="t" style="left:158.9px;top:360.58px;transform:scaleX(0.959)">Südstraße 115,2,L, Bad</div>
<div class="t" style="left:302.2px;top:360.58px;transform:scaleX(0.951)">0050</div>
<div class="t" style="left:335.1px;top:360.58px;transform:scaleX(0.840)">SOBW</div>
<div class="t" style="left:373.1px;top:360.58px;transform:scaleX(0.926)">Badewanne</div>
<div class="t" style="left:499.1px;top:360.58px;transform:scaleX(0.973)">13.08.1998</div>
<div class="t" style="left:603.4px;top:360.58px;transform:scaleX(0.907)">Nein</div>
<div class="t" style="left:652.6px;top:360.58px;transform:scaleX(0.932)">SOBW2 160x70, Stahlb</div>
<div class="t" style="left:762px;top:360.58px;transform:scaleX(0.881)">SOBW3 KALDEWEI Sanif</div>
<div class="t r" style="right:188.4px;top:360.58px;transform:scaleX(0.980);transform-origin:100% 0">0,00</div>
<div class="t r" style="right:111.9px;top:360.58px;transform:scaleX(0.951);transform-origin:100% 0">0</div>
<div class="t" style="left:158.9px;top:375.4px;transform:scaleX(0.959)">Südstraße 115,2,L, Bad</div>
<div class="t" style="left:302.2px;top:375.4px;transform:scaleX(0.951)">0040</div>
<div class="t" style="left:335.1px;top:375.4px;transform:scaleX(0.840)">SMB</div>
<div class="t" style="left:373.1px;top:375.4px;transform:scaleX(0.932)">Mischbatterie</div>
<div class="t" style="left:499.1px;top:375.4px;transform:scaleX(0.973)">13.08.1998</div>
<div class="t" style="left:603.4px;top:375.4px;transform:scaleX(0.907)">Nein</div>
<div class="t" style="left:652.6px;top:375.4px;transform:scaleX(0.922)">SMB05 Waschtisch-Ein</div>
<div class="t r" style="right:188.4px;top:375.4px;transform:scaleX(0.980);transform-origin:100% 0">0,00</div>
<div class="t r" style="right:111.9px;top:375.4px;transform:scaleX(0.951);transform-origin:100% 0">0</div>
<div class="t" style="left:158.9px;top:390.22px;transform:scaleX(0.959)">Südstraße 115,2,L, Bad</div>
<div class="t" style="left:302.2px;top:390.22px;transform:scaleX(0.951)">0030</div>
<div class="t" style="left:335.1px;top:390.22px;transform:scaleX(0.840)">SMB</div>
<div class="t" style="left:373.1px;top:390.22px;transform:scaleX(0.932)">Mischbatterie</div>
<div class="t" style="left:499.1px;top:390.22px;transform:scaleX(0.973)">17.05.2011</div>
<div class="t" style="left:603.4px;top:390.22px;transform:scaleX(0.907)">Nein</div>
<div class="t" style="left:652.6px;top:390.22px;transform:scaleX(0.924)">SMB06 Badewannen-Ein</div>
<div class="t" style="left:762px;top:390.22px;transform:scaleX(0.927)">SMB11 Grohe Eurostyl</div>
<div class="t r" style="right:188.4px;top:390.22px;transform:scaleX(0.980);transform-origin:100% 0">0,00</div>
<div class="t r" style="right:111.9px;top:390.22px;transform:scaleX(0.951);transform-origin:100% 0">0</div>
<div class="t" style="left:158.9px;top:405.04px;transform:scaleX(0.959)">Südstraße 115,2,L, Bad</div>
<div class="t" style="left:302.2px;top:405.04px;transform:scaleX(0.951)">0020</div>
<div class="t" style="left:335.1px;top:405.04px;transform:scaleX(0.840)">SBG</div>
<div class="t" style="left:373.1px;top:405.04px;transform:scaleX(0.936)">Brausegarnitur</div>
<div class="t" style="left:499.1px;top:405.04px;transform:scaleX(0.973)">13.08.1998</div>
<div class="t" style="left:603.4px;top:405.04px;transform:scaleX(0.907)">Nein</div>
<div class="t" style="left:652.6px;top:405.04px;transform:scaleX(0.925)">SBG2 Brausegarnitur</div>
<div class="t r" style="right:188.4px;top:405.04px;transform:scaleX(0.980);transform-origin:100% 0">0,00</div>
<div class="t r" style="right:111.9px;top:405.04px;transform:scaleX(0.951);transform-origin:100% 0">0</div>
<div class="t" style="left:158.9px;top:419.86px;transform:scaleX(0.959)">Südstraße 115,2,L, Bad</div>
<div class="t" style="left:302.2px;top:419.86px;transform:scaleX(0.951)">0010</div>
<div class="t" style="left:335.1px;top:419.86px;transform:scaleX(0.840)">HHK</div>
<div class="t" style="left:373.1px;top:419.86px;transform:scaleX(0.930)">Heizkörper</div>
<div class="t" style="left:499.1px;top:419.86px;transform:scaleX(0.973)">13.08.1998</div>
<div class="t" style="left:603.4px;top:419.86px;transform:scaleX(0.907)">Nein</div>
<div class="t" style="left:652.6px;top:419.86px;transform:scaleX(0.925)">HHK1 Plattenheizkörp</div>
<div class="t r" style="right:188.4px;top:419.86px;transform:scaleX(0.980);transform-origin:100% 0">0,00</div>
<div class="t r" style="right:111.9px;top:419.86px;transform:scaleX(0.951);transform-origin:100% 0">0</div>
<div class="t" style="left:12.5px;top:434.68px;transform:scaleX(0.954)">P001-10912-GE0101-1005-</div>
<div class="t" style="left:130px;top:436.68px;font-size:7px;-webkit-text-stroke:0;letter-spacing:-0.3px">...</div>
<svg class="a" style="left:144.5px;top:435.73px" width="12" height="10" viewBox="0 0 12 10"><path d="M3.5 0.8 H7.5 V5.2 H10.3 V8.8 H0.8 V5.2 H3.5 Z" fill="#fbfbf0" stroke="#5e5a2a" stroke-width="1.2"/></svg>
<div class="a" style="left:1105.8px;top:439.33px;width:3px;height:3px;background:#7a7420"></div>
<div class="t r" style="right:110.7px;top:434.68px;font-weight:bold;font-size:10px;-webkit-text-stroke:0.2px #111;color:#111">0</div>
<div class="t" style="left:12.6px;top:449.5px;transform:scaleX(0.941)">P001-10912-GE0101-1005-WK</div>
<div class="t" style="left:158.9px;top:449.5px;transform:scaleX(0.957)">Südstraße 115,2,L, Küche</div>
<div class="t" style="left:302.2px;top:449.5px;transform:scaleX(0.951)">0030</div>
<div class="t" style="left:335.1px;top:449.5px;transform:scaleX(0.840)">SMB</div>
<div class="t" style="left:373.1px;top:449.5px;transform:scaleX(0.932)">Mischbatterie</div>
<div class="t" style="left:499.1px;top:449.5px;transform:scaleX(0.973)">04.08.2008</div>
<div class="t" style="left:603.4px;top:449.5px;transform:scaleX(0.907)">Nein</div>
<div class="t" style="left:652.6px;top:449.5px;transform:scaleX(0.925)">SMB07 Spültisch-Einh</div>
<div class="t" style="left:762px;top:449.5px;transform:scaleX(0.925)">SMB2 Grohe Eurodisc</div>
<div class="t r" style="right:188.4px;top:449.5px;transform:scaleX(0.980);transform-origin:100% 0">0,00</div>
<div class="t r" style="right:111.9px;top:449.5px;transform:scaleX(0.951);transform-origin:100% 0">0</div>
<div class="t" style="left:158.9px;top:464.32px;transform:scaleX(0.957)">Südstraße 115,2,L, Küche</div>
<div class="t" style="left:302.2px;top:464.32px;transform:scaleX(0.951)">0020</div>
<div class="t" style="left:335.1px;top:464.32px;transform:scaleX(0.840)">HHK</div>
<div class="t" style="left:373.1px;top:464.32px;transform:scaleX(0.930)">Heizkörper</div>
<div class="t" style="left:499.1px;top:464.32px;transform:scaleX(0.973)">13.08.1998</div>
<div class="t" style="left:603.4px;top:464.32px;transform:scaleX(0.907)">Nein</div>
<div class="t" style="left:652.6px;top:464.32px;transform:scaleX(0.925)">HHK1 Plattenheizkörp</div>
<div class="t r" style="right:188.4px;top:464.32px;transform:scaleX(0.980);transform-origin:100% 0">0,00</div>
<div class="t r" style="right:111.9px;top:464.32px;transform:scaleX(0.951);transform-origin:100% 0">0</div>
<div class="t" style="left:158.9px;top:479.14px;transform:scaleX(0.957)">Südstraße 115,2,L, Küche</div>
<div class="t" style="left:302.2px;top:479.14px;transform:scaleX(0.951)">0010</div>
<div class="t" style="left:335.1px;top:479.14px;transform:scaleX(0.840)">FB</div>
<div class="t" style="left:373.1px;top:479.14px;transform:scaleX(0.925)">Fußboden</div>
<div class="t" style="left:499.1px;top:479.14px;transform:scaleX(0.973)">01.01.1920</div>
<div class="t" style="left:603.4px;top:479.14px;transform:scaleX(0.907)">Nein</div>
<div class="t" style="left:652.6px;top:479.14px;transform:scaleX(0.920)">FB02 Linoleum/PVC-Be</div>
<div class="t r" style="right:188.4px;top:479.14px;transform:scaleX(0.980);transform-origin:100% 0">0,00</div>
<div class="t r" style="right:111.9px;top:479.14px;transform:scaleX(0.951);transform-origin:100% 0">0</div>
<div class="t" style="left:12.5px;top:493.96px;transform:scaleX(0.954)">P001-10912-GE0101-1005-</div>
<div class="t" style="left:130px;top:495.96px;font-size:7px;-webkit-text-stroke:0;letter-spacing:-0.3px">...</div>
<svg class="a" style="left:144.5px;top:495.11px" width="12" height="10" viewBox="0 0 12 10"><path d="M3.5 0.8 H7.5 V5.2 H10.3 V8.8 H0.8 V5.2 H3.5 Z" fill="#fbfbf0" stroke="#5e5a2a" stroke-width="1.2"/></svg>
<div class="a" style="left:1105.8px;top:498.71px;width:3px;height:3px;background:#7a7420"></div>
<div class="t r" style="right:110.7px;top:493.96px;font-weight:bold;font-size:10px;-webkit-text-stroke:0.2px #111;color:#111">0</div>
<div class="t" style="left:12.6px;top:508.78px;transform:scaleX(0.940)">P001-10912-GE0101-1005-WR</div>
<div class="t" style="left:158.9px;top:508.78px;transform:scaleX(0.953)">Südstraße 115,2,L, Wohnraum</div>
<div class="t" style="left:302.2px;top:508.78px;transform:scaleX(0.951)">0060</div>
<div class="t" style="left:335.1px;top:508.78px;transform:scaleX(0.840)">HHK</div>
<div class="t" style="left:373.1px;top:508.78px;transform:scaleX(0.930)">Heizkörper</div>
<div class="t" style="left:499.1px;top:508.78px;transform:scaleX(0.973)">13.08.1998</div>
<div class="t" style="left:603.4px;top:508.78px;transform:scaleX(0.907)">Nein</div>
<div class="t" style="left:652.6px;top:508.78px;transform:scaleX(0.925)">HHK1 Plattenheizkörp</div>
<div class="t r" style="right:188.4px;top:508.78px;transform:scaleX(0.980);transform-origin:100% 0">0,00</div>
<div class="t r" style="right:111.9px;top:508.78px;transform:scaleX(0.951);transform-origin:100% 0">0</div>
<div class="t" style="left:158.9px;top:523.6px;transform:scaleX(0.953)">Südstraße 115,2,L, Wohnraum</div>
<div class="t" style="left:302.2px;top:523.6px;transform:scaleX(0.951)">0050</div>
<div class="t" style="left:335.1px;top:523.6px;transform:scaleX(0.840)">HHK</div>
<div class="t" style="left:373.1px;top:523.6px;transform:scaleX(0.930)">Heizkörper</div>
<div class="t" style="left:499.1px;top:523.6px;transform:scaleX(0.973)">13.08.1998</div>
<div class="t" style="left:603.4px;top:523.6px;transform:scaleX(0.907)">Nein</div>
<div class="t" style="left:652.6px;top:523.6px;transform:scaleX(0.925)">HHK1 Plattenheizkörp</div>
<div class="t r" style="right:188.4px;top:523.6px;transform:scaleX(0.980);transform-origin:100% 0">0,00</div>
<div class="t r" style="right:111.9px;top:523.6px;transform:scaleX(0.951);transform-origin:100% 0">0</div>
<div class="t" style="left:158.9px;top:538.42px;transform:scaleX(0.953)">Südstraße 115,2,L, Wohnraum</div>
<div class="t" style="left:302.2px;top:538.42px;transform:scaleX(0.951)">0040</div>
<div class="t" style="left:335.1px;top:538.42px;transform:scaleX(0.840)">FB</div>
<div class="t" style="left:373.1px;top:538.42px;transform:scaleX(0.925)">Fußboden</div>
<div class="t" style="left:499.1px;top:538.42px;transform:scaleX(0.973)">01.01.1920</div>
<div class="t" style="left:603.4px;top:538.42px;transform:scaleX(0.907)">Nein</div>
<div class="t" style="left:652.6px;top:538.42px;transform:scaleX(0.920)">FB02 Linoleum/PVC-Be</div>
<div class="t r" style="right:188.4px;top:538.42px;transform:scaleX(0.980);transform-origin:100% 0">0,00</div>
<div class="t r" style="right:111.9px;top:538.42px;transform:scaleX(0.951);transform-origin:100% 0">0</div>
<div class="t" style="left:158.9px;top:553.24px;transform:scaleX(0.953)">Südstraße 115,2,L, Wohnraum</div>
<div class="t" style="left:302.2px;top:553.24px;transform:scaleX(0.951)">0030</div>
<div class="t" style="left:335.1px;top:553.24px;transform:scaleX(0.840)">HHK</div>
<div class="t" style="left:373.1px;top:553.24px;transform:scaleX(0.930)">Heizkörper</div>
<div class="t" style="left:603.4px;top:553.24px;transform:scaleX(0.907)">Nein</div>
<div class="t r" style="right:188.4px;top:553.24px;transform:scaleX(0.980);transform-origin:100% 0">0,00</div>
<div class="t r" style="right:111.9px;top:553.24px;transform:scaleX(0.951);transform-origin:100% 0">0</div>
<div class="t" style="left:158.9px;top:568.06px;transform:scaleX(0.953)">Südstraße 115,2,L, Wohnraum</div>
<div class="t" style="left:302.2px;top:568.06px;transform:scaleX(0.951)">0020</div>
<div class="t" style="left:335.1px;top:568.06px;transform:scaleX(0.840)">HHK</div>
<div class="t" style="left:373.1px;top:568.06px;transform:scaleX(0.930)">Heizkörper</div>
<div class="t" style="left:499.1px;top:568.06px;transform:scaleX(0.973)">13.08.1998</div>
<div class="t" style="left:603.4px;top:568.06px;transform:scaleX(0.907)">Nein</div>
<div class="t" style="left:652.6px;top:568.06px;transform:scaleX(0.925)">HHK1 Plattenheizkörp</div>
<div class="t r" style="right:188.4px;top:568.06px;transform:scaleX(0.980);transform-origin:100% 0">0,00</div>
<div class="t r" style="right:111.9px;top:568.06px;transform:scaleX(0.951);transform-origin:100% 0">0</div>
<div class="t" style="left:158.9px;top:582.88px;transform:scaleX(0.953)">Südstraße 115,2,L, Wohnraum</div>
<div class="t" style="left:302.2px;top:582.88px;transform:scaleX(0.951)">0010</div>
<div class="t" style="left:335.1px;top:582.88px;transform:scaleX(0.840)">FB</div>
<div class="t" style="left:373.1px;top:582.88px;transform:scaleX(0.925)">Fußboden</div>
<div class="t" style="left:499.1px;top:582.88px;transform:scaleX(0.973)">01.01.1920</div>
<div class="t" style="left:603.4px;top:582.88px;transform:scaleX(0.907)">Nein</div>
<div class="t" style="left:652.6px;top:582.88px;transform:scaleX(0.920)">FB02 Linoleum/PVC-Be</div>
<div class="t r" style="right:188.4px;top:582.88px;transform:scaleX(0.980);transform-origin:100% 0">0,00</div>
<div class="t r" style="right:111.9px;top:582.88px;transform:scaleX(0.951);transform-origin:100% 0">0</div>
<div class="t" style="left:12.5px;top:597.7px;transform:scaleX(0.954)">P001-10912-GE0101-1005-</div>
<div class="t" style="left:130px;top:599.7px;font-size:7px;-webkit-text-stroke:0;letter-spacing:-0.3px">...</div>
<svg class="a" style="left:144.5px;top:599.03px" width="12" height="10" viewBox="0 0 12 10"><path d="M3.5 0.8 H7.5 V5.2 H10.3 V8.8 H0.8 V5.2 H3.5 Z" fill="#fbfbf0" stroke="#5e5a2a" stroke-width="1.2"/></svg>
<div class="a" style="left:1105.8px;top:602.63px;width:3px;height:3px;background:#7a7420"></div>
<div class="t r" style="right:110.7px;top:597.7px;font-weight:bold;font-size:10px;-webkit-text-stroke:0.2px #111;color:#111">0</div>
</div>
<svg class="a" style="left:0;top:56px" width="160" height="14" viewBox="0 56 160 14"><path d="M148.3 66.5 L151.6 63.3 L154.9 66.5 Z" fill="#d0021b"/><path d="M6 67.2 V62.7 H11.6 V67.2" fill="none" stroke="#e03040" stroke-width="1.6"/></svg>
<svg class="a" style="left:1214.5px;top:79.5px" width="8" height="8" viewBox="0 0 8 8"><path d="M1 5.5 L4 2.5 L7 5.5" fill="none" stroke="#4a4a4a" stroke-width="1.6"/></svg>
<svg class="a" style="left:1214.5px;top:94px" width="8" height="8" viewBox="0 0 8 8"><path d="M1 2.5 L4 5.5 L7 2.5" fill="none" stroke="#4a4a4a" stroke-width="1.6"/></svg>
<svg class="a" style="left:1214.5px;top:567px" width="8" height="8" viewBox="0 0 8 8"><path d="M1 5.5 L4 2.5 L7 5.5" fill="none" stroke="#4a4a4a" stroke-width="1.6"/></svg>
<svg class="a" style="left:1214.5px;top:581.3px" width="8" height="8" viewBox="0 0 8 8"><path d="M1 2.5 L4 5.5 L7 2.5" fill="none" stroke="#4a4a4a" stroke-width="1.6"/></svg>
<svg class="a" style="left:497.5px;top:597px" width="8" height="8" viewBox="0 0 8 8"><path d="M5 1 L2 4 L5 7" fill="none" stroke="#4a4a4a" stroke-width="1.6"/></svg>
<svg class="a" style="left:511.8px;top:597px" width="8" height="8" viewBox="0 0 8 8"><path d="M3 1 L6 4 L3 7" fill="none" stroke="#4a4a4a" stroke-width="1.6"/></svg>
<svg class="a" style="left:1184px;top:597px" width="8" height="8" viewBox="0 0 8 8"><path d="M5 1 L2 4 L5 7" fill="none" stroke="#4a4a4a" stroke-width="1.6"/></svg>
<svg class="a" style="left:1197.8px;top:597px" width="8" height="8" viewBox="0 0 8 8"><path d="M3 1 L6 4 L3 7" fill="none" stroke="#4a4a4a" stroke-width="1.6"/></svg>
<div class="a" style="left:525.5px;top:597.8px;width:603px;height:7.5px;background:#b8c1cb"></div>
<svg class="a" style="left:822px;top:598px" width="10" height="7" viewBox="822 598 10 7"><path d="M824.5 599.8v3.2M827 599.8v3.2M829.5 599.8v3.2" stroke="#f4f6f8" stroke-width="1"/></svg>
<div class="a" style="left:1214.8px;top:197.5px;width:8.2px;height:112px;background:#b8c1cb"></div>
<svg class="a" style="left:1214px;top:250px" width="10" height="10" viewBox="1214 250 10 10"><path d="M1216.3 252.3h4.6M1216.3 254.8h4.6M1216.3 257.3h4.6" stroke="#f4f6f8" stroke-width="1"/></svg>
</body></html>
